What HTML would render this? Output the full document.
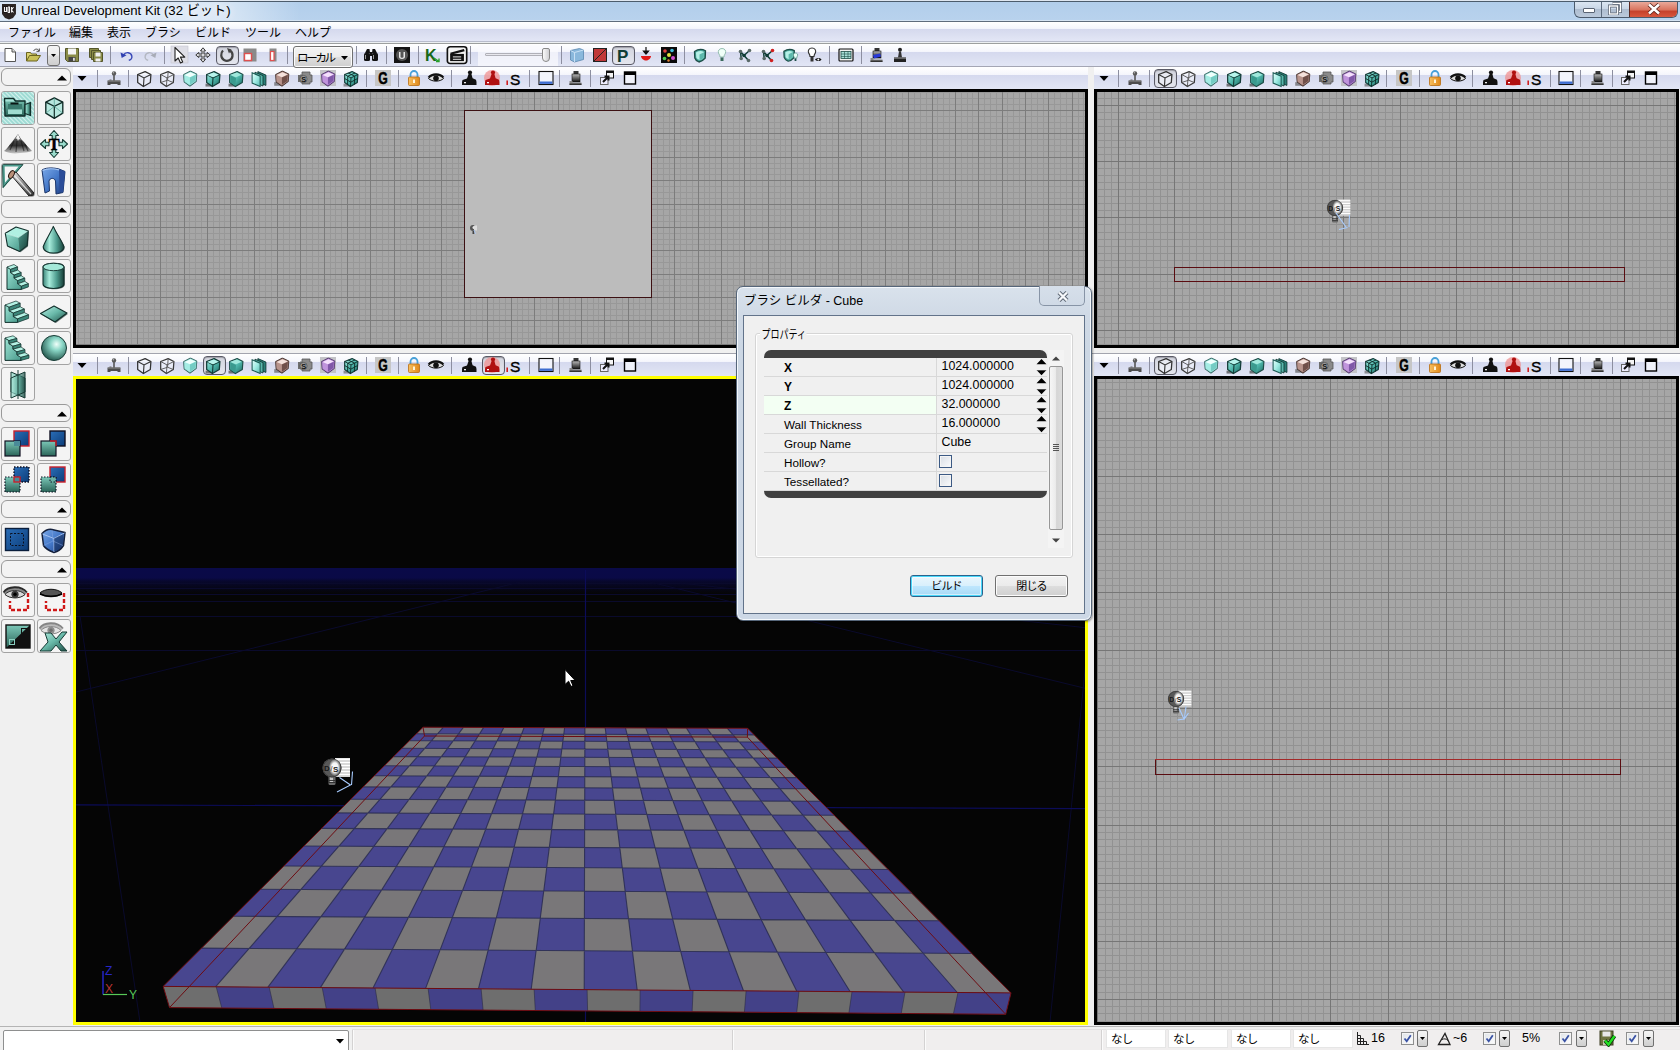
<!DOCTYPE html>
<html lang="ja"><head><meta charset="utf-8"><title>Unreal Development Kit</title>
<style>
*{box-sizing:border-box;margin:0;padding:0}
html,body{width:1680px;height:1050px;overflow:hidden;background:#f0f0f0}
body{position:relative;font-family:"Liberation Sans","Noto Sans CJK JP",sans-serif;font-size:12px;color:#000}
.a{position:absolute}
#title{left:0;top:0;width:1680px;height:22px;background:linear-gradient(#dfe7f1 0,#dfe7f1 1px,#4c5c6c 1px,#4c5c6c 2px,#b2ceeb 2px,#b8d2ed 20px,#d5e4f3 20px,#d5e4f3 21px,#5e6c7c 21px)}
#title .t{left:21px;top:3px;font-size:13.2px;line-height:16px;white-space:nowrap;color:#000;text-shadow:0 0 7px rgba(255,255,255,.95),0 0 12px rgba(255,255,255,.7),0 0 16px rgba(255,255,255,.5)}
#menu{left:0;top:22px;width:1680px;height:19px;background:linear-gradient(#ffffff 0,#f4f6fc 34%,#d5d9ee 38%,#dde1f2 75%,#e3e6f6 100%)}
#menu span{position:absolute;top:3px;line-height:16px;font-size:12px;white-space:nowrap}
#mline{left:0;top:41px;width:1680px;height:3px;background:linear-gradient(#b8bccc 0,#b8bccc 33.3%,#eceff2 33.4%,#eceff2 66.6%,#9c9f9f 66.7%)}
#tb{left:0;top:44px;width:1680px;height:22px;background:linear-gradient(#ffffff 0,#f5f6fc 34%,#d5d9ee 38%,#dde1f2 75%,#e2e6f5 100%)}
.vtb{height:22px;background:linear-gradient(#ffffff 0,#f5f6fc 34%,#d5d9ee 38%,#dde1f2 75%,#e2e6f5 100%)}
.sep{position:absolute;width:1px;background:#8d8fa0}
.vp{position:absolute;border:3px solid #000;background-color:#a6a6a6}
</style></head><body>
<div id="title" class="a">
<div class="a" style="left:0;top:2px;width:300px;height:18px;background:linear-gradient(90deg,rgba(255,255,255,.5) 0,rgba(255,255,255,.52) 72%,rgba(255,255,255,0) 100%)"></div>
<svg class="a" style="left:.5px;top:2.500px" width="16" height="17" viewBox="0 0 16 17"><path d="M1 1h14v10l-3 4-4 1.5L4 15 1 11z" fill="#2a2422"/><path d="M2.5 3h11v7h-11z" fill="#1a1615"/><path d="M3.5 4v4.5h2V4M7 4v5.5M7 4h1.5v5.5H7M10.5 4v5.5M12.5 4l-2 3 2 2.5" stroke="#f2f2f2" stroke-width="1.1" fill="none"/></svg>
<div class="a t">Unreal Development Kit (32 ビット)</div>
<div class="a" style="left:1574px;top:2px;width:104px;height:16px;border:1px solid #4b5a6c;border-top:none;border-radius:0 0 6px 6px;overflow:hidden;background:linear-gradient(#dbe6f2 0,#c9d6e6 45%,#aebdd0 50%,#bccadb 100%)">
<div class="a" style="left:26px;top:0;width:1px;height:18px;background:#5c6b7e"></div>
<div class="a" style="left:54px;top:0;width:49px;height:18px;border-left:1px solid #5c2a22;background:linear-gradient(#e9a99a 0,#d9725c 45%,#c4402b 50%,#d6553c 80%,#e8907a 100%)"></div>
<div class="a" style="left:8px;top:6px;width:12px;height:5px;background:#fff;border:1px solid #5a6474;border-radius:1px"></div>
<svg class="a" style="left:33px;top:0px" width="14" height="13" viewBox="0 0 14 13"><path d="M4.5 1.5h8v8h-2" fill="none" stroke="#5a6474" stroke-width="3"/><path d="M4.500 1.500h8v8h-2" fill="none" stroke="#fff" stroke-width="1.4"/><rect x="1.500" y="4" width="8" height="8" fill="none" stroke="#5a6474" stroke-width="3"/><rect x="1.500" y="4" width="8" height="8" fill="none" stroke="#fff" stroke-width="1.4"/></svg>
<svg class="a" style="left:72px;top:1px" width="14" height="12" viewBox="0 0 14 12"><path d="M2 1.500l10 9M12 1.500l-10 9" stroke="#5a2018" stroke-width="4.200" fill="none"/><path d="M2 1.500l10 9M12 1.500l-10 9" stroke="#fff" stroke-width="2.600" fill="none"/></svg>
</div>
</div>
<div id="menu" class="a"><span style="left:8px">ファイル</span><span style="left:69px">編集</span><span style="left:107px">表示</span><span style="left:145px">ブラシ</span><span style="left:195px">ビルド</span><span style="left:245px">ツール</span><span style="left:295px">ヘルプ</span></div>
<div id="mline" class="a"></div>
<div id="tb" class="a">
</div>
<svg width="0" height="0" style="position:absolute"><defs>
<linearGradient id="tl" x1="0" y1="0" x2="1" y2="1"><stop offset="0" stop-color="#b8f0e4"/><stop offset=".5" stop-color="#68b8a8"/><stop offset="1" stop-color="#1e4e46"/></linearGradient>
<linearGradient id="tv" x1="0" y1="0" x2="1" y2="0"><stop offset="0" stop-color="#b0ecde"/><stop offset=".55" stop-color="#5aa898"/><stop offset="1" stop-color="#1a463e"/></linearGradient>
<linearGradient id="td" x1="0" y1="0" x2="0" y2="1"><stop offset="0" stop-color="#7cc8b8"/><stop offset="1" stop-color="#2a6458"/></linearGradient>
<radialGradient id="ts" cx=".6" cy=".35" r=".7"><stop offset="0" stop-color="#f0fffa"/><stop offset=".35" stop-color="#8ad6c6"/><stop offset="1" stop-color="#1e5046"/></radialGradient>
<linearGradient id="bl" x1="0" y1="0" x2="1" y2="1"><stop offset="0" stop-color="#2a6eb8"/><stop offset="1" stop-color="#0c3c78"/></linearGradient>
<linearGradient id="ba" x1="0" y1="0" x2="1" y2="1"><stop offset="0" stop-color="#7aa8e8"/><stop offset=".5" stop-color="#4478c8"/><stop offset="1" stop-color="#1c3c80"/></linearGradient>
<linearGradient id="gy" x1="0" y1="0" x2="1" y2="1"><stop offset="0" stop-color="#e8e8e8"/><stop offset=".5" stop-color="#8a8a8a"/><stop offset="1" stop-color="#2a2a2a"/></linearGradient>
<linearGradient id="fL" x1="0" y1="0" x2="1" y2="1"><stop offset="0" stop-color="#9ce4d4"/><stop offset="1" stop-color="#4a9a8c"/></linearGradient><linearGradient id="fR" x1="0" y1="0" x2="1" y2="1"><stop offset="0" stop-color="#4a988a"/><stop offset="1" stop-color="#183e38"/></linearGradient><linearGradient id="cy" x1="0" y1="0" x2="1" y2="0"><stop offset="0" stop-color="#3a8478"/><stop offset=".3" stop-color="#a8ecdc"/><stop offset=".65" stop-color="#4e9c8e"/><stop offset="1" stop-color="#163c36"/></linearGradient><pattern id="hatch" width="3" height="3" patternUnits="userSpaceOnUse" patternTransform="rotate(45)"><rect width="3" height="3" fill="#9cdad2"/><rect width="3" height="1.100" fill="#d4f2ee"/></pattern>
</defs></svg>
<style>.lb{position:absolute;width:34px;height:34px;border:1px solid #a2a2a2;border-radius:3px;background:#f4f4f4;overflow:hidden}.lb svg{position:absolute;left:0;top:0}.lh{position:absolute;left:1px;width:70px;height:18px;border:1px solid #9a9a9a;border-radius:6px;background:#f3f3f3}</style>
<div class="a" style="left:0;top:67px;width:73px;height:960px;background:#f0f0f0"></div>
<div class="lh" style="top:68px"><svg class="a" style="left:55px;top:6px" width="10" height="6"><path d="M0 5.500L5 .5L10 5.500z" fill="#000"/></svg></div>
<div class="lb" style="left:1px;top:91px"><svg width="32" height="32" viewBox="0 0 32 32"><rect x="0" y="0" width="32" height="32" fill="url(#hatch)"/><path d="M2.500 6.500h9l2 2.500h9.500v15H3z" fill="url(#td)" stroke="#102e2a" stroke-width="1.400" stroke-linejoin="round"/><path d="M3.500 7.500h7.500l1.500 2H3.500z" fill="#a8e4d8"/><rect x="6" y="12" width="14" height="5" fill="#3a7a6e"/><rect x="8.500" y="10.500" width="8" height="2" fill="#0a1614"/><rect x="6" y="17.500" width="14" height="4.500" fill="#a0dccf"/><path d="M23 12.500l5.500-2v13l-5.500-2z" fill="url(#tv)" stroke="#102e2a" stroke-width="1.300" stroke-linejoin="round"/></svg></div><div class="lb" style="left:37px;top:91px"><svg width="32" height="32" viewBox="0 0 32 32"><g transform="translate(2.700 2.500) scale(.85)"><path d="M16 4l10 5v13l-10 6-10-6V9z" fill="#a8e4d8" fill-opacity=".8" stroke="#102a26" stroke-width="1.600" stroke-linejoin="round"/><path d="M6 9l10 5 10-5M16 14v14" stroke="#102a26" stroke-width="1.400" fill="none"/><path d="M16 4v10M6 22l10-8 10 8" stroke="#4a9a8c" stroke-width=".8" fill="none"/></g></svg></div>
<div class="lb" style="left:1px;top:127px"><svg width="32" height="32" viewBox="0 0 32 32"><defs><linearGradient id="mg" x1="0" y1="0" x2="0" y2="1"><stop offset="0" stop-color="#6a6a6a"/><stop offset=".6" stop-color="#2e2e2e"/><stop offset="1" stop-color="#5a5a5a" stop-opacity=".3"/></linearGradient></defs><path d="M2 23c3-2 5-6 8-9l3-4 3-4 3 5 3 3c2 3 5 6 8 9-4 2-8 1.500-12 2-6 1-12 0-16-2z" fill="url(#mg)"/><path d="M16 6l-2.500 5 1.500-.5 1 2.500 1-2 1.500 1z" fill="#f4f4f4"/><path d="M12 13l-4 9M15 13l-1 11M19 13l3 10M23 16l3 7" stroke="#111" stroke-width="1.200" fill="none" opacity=".55"/></svg></div><div class="lb" style="left:37px;top:127px"><svg width="32" height="32" viewBox="0 0 32 32"><path d="M16 2.500l4.500 5h-2.700v3.500h-3.600V7.500h-2.700zM16 29.500l4.500-5h-2.700v-3.500h-3.600v3.500h-2.700zM2.500 16l5-4.500v2.700h3.500v3.600H7.500v2.700zM29.500 16l-5-4.500v2.700h-3.500v3.600h3.500v2.700z" fill="#9adccc" stroke="#153a33" stroke-width="1.100" stroke-linejoin="round"/><text x="10.700" y="21.700" font-family="Liberation Serif,serif" font-weight="bold" font-size="16" fill="#000" stroke="#000" stroke-width=".5">T</text></svg></div>
<div class="lb" style="left:1px;top:163px"><svg width="32" height="32" viewBox="0 0 32 32"><path d="M1.500 1.500h17.500L2 21.500z" fill="none" stroke="#4a9a8c" stroke-width="2.200"/><path d="M.5 .5h20.500L1 23.500z" fill="none" stroke="#153a33" stroke-width=".8"/><path d="M9 11l5-3 18 21v3h-5z" fill="url(#gy)" stroke="#111" stroke-width=".9"/><path d="M12 11l17 19" stroke="#fff" stroke-width="1.200" opacity=".7"/><ellipse cx="9.500" cy="10.500" rx="2.300" ry="4.200" transform="rotate(30 9.500 10.500)" fill="#b89078" stroke="#2a1a14"/></svg></div><div class="lb" style="left:37px;top:163px"><svg width="32" height="32" viewBox="0 0 32 32"><path d="M4 6c3-2 9-3 17-1l6 2.500-2 21-7 1.500-.5-13c-1-3.500-5.500-3.500-6.500 0l.5 10-4.500 2z" fill="url(#ba)" stroke="#1a3468" stroke-width="1"/><path d="M21 5l6 2.500-2 21-3.500-1z" fill="#2a4c98"/><path d="M4.500 6.500c3-1.500 9-2.500 16.500-.7" stroke="#a8c8f4" stroke-width="1.200" fill="none"/></svg></div>
<div class="lh" style="top:200px"><svg class="a" style="left:55px;top:6px" width="10" height="6"><path d="M0 5.500L5 .5L10 5.500z" fill="#000"/></svg></div>
<div class="lb" style="left:1px;top:223px"><svg width="32" height="32" viewBox="0 0 32 32"><path d="M3.300 9.300L14 3l12.200 3.700-1 14.900-7.500 5.800L5.500 22.100z" fill="#0e2a26" transform="translate(.8 .9)" opacity=".6"/><path d="M3.300 9.300L14 3l12.200 3.700L16.500 13.500z" fill="#b0f0e2"/><path d="M3.300 9.300L16.500 13.500l1.200 13.900L5.500 22.100z" fill="url(#fL)"/><path d="M16.500 13.500L26.200 6.700l-1 14.900-7.500 5.800z" fill="url(#fR)"/><path d="M3.300 9.300L14 3l12.200 3.700-1 14.900-7.500 5.800L5.500 22.100z" fill="none" stroke="#12302c" stroke-width="1.100" stroke-linejoin="round"/><path d="M3.800 9.500L16.500 13.500 25.700 7" stroke="#d8fff6" stroke-width=".8" fill="none" opacity=".8"/></svg></div><div class="lb" style="left:37px;top:223px"><svg width="32" height="32" viewBox="0 0 32 32"><path d="M15.300 2.400C18 9 24 17 26 22.700c0 8.400-20.800 8.400-20.800 0C7 17 12.500 9 15.300 2.400z" fill="#0e2a26" transform="translate(.8 .8)" opacity=".55"/><path d="M15.300 2.400C18 9 24 17 26 22.700c0 8.400-20.800 8.400-20.800 0C7 17 12.500 9 15.300 2.400z" fill="url(#cy)" stroke="#12302c" stroke-width="1.100" stroke-linejoin="round"/></svg></div>
<div class="lb" style="left:1px;top:259px"><svg width="32" height="32" viewBox="0 0 32 32"><g><polygon points="5.0,7.0 8.6,9.4 8.6,12.6 12.2,15.0 12.2,18.2 15.8,20.6 15.8,23.8 19.4,26.2 19.4,29.4 5.0,29.4" fill="url(#fL)" stroke="#12302c" stroke-width="1" stroke-linejoin="round"/><polygon points="5.0,7.0 12.0,4.5 15.6,6.9 8.6,9.4" fill="#b4f2e4" stroke="#12302c" stroke-width=".7" stroke-linejoin="round"/><polygon points="8.6,9.4 15.6,6.9 15.6,10.1 8.6,12.6" fill="#3c877a" stroke="#12302c" stroke-width=".7" stroke-linejoin="round"/><polygon points="8.6,12.6 15.6,10.1 19.2,12.5 12.2,15.0" fill="#b4f2e4" stroke="#12302c" stroke-width=".7" stroke-linejoin="round"/><polygon points="12.2,15.0 19.2,12.5 19.2,15.7 12.2,18.2" fill="#3c877a" stroke="#12302c" stroke-width=".7" stroke-linejoin="round"/><polygon points="12.2,18.2 19.2,15.7 22.8,18.1 15.8,20.6" fill="#b4f2e4" stroke="#12302c" stroke-width=".7" stroke-linejoin="round"/><polygon points="15.8,20.6 22.8,18.1 22.8,21.3 15.8,23.8" fill="#3c877a" stroke="#12302c" stroke-width=".7" stroke-linejoin="round"/><polygon points="15.8,23.8 22.8,21.3 26.4,23.7 19.4,26.2" fill="#b4f2e4" stroke="#12302c" stroke-width=".7" stroke-linejoin="round"/><polygon points="19.4,26.2 26.4,23.7 26.4,26.9 19.4,29.4" fill="#3c877a" stroke="#12302c" stroke-width=".7" stroke-linejoin="round"/></g></svg></div><div class="lb" style="left:37px;top:259px"><svg width="32" height="32" viewBox="0 0 32 32"><path d="M5 7c0-5 21-5 21 0v17c0 6-21 6-21 0z" fill="#0e2a26" transform="translate(.8 .8)" opacity=".55"/><path d="M5 7c0-5 21-5 21 0v17c0 6-21 6-21 0z" fill="url(#cy)" stroke="#12302c" stroke-width="1.100"/><ellipse cx="15.500" cy="7" rx="10.500" ry="3.700" fill="#a4e8d8" stroke="#12302c" stroke-width=".9"/></svg></div>
<div class="lb" style="left:1px;top:295px"><svg width="32" height="32" viewBox="0 0 32 32"><g><polygon points="3.0,9.0 7.2,11.2 7.2,14.8 11.4,17.0 11.4,20.6 15.6,22.8 15.6,26.4 3.0,26.4" fill="url(#fL)" stroke="#12302c" stroke-width="1" stroke-linejoin="round"/><polygon points="3.0,9.0 14.0,5.0 18.2,7.2 7.2,11.2" fill="#b4f2e4" stroke="#12302c" stroke-width=".7" stroke-linejoin="round"/><polygon points="7.2,11.2 18.2,7.2 18.2,10.8 7.2,14.8" fill="#3c877a" stroke="#12302c" stroke-width=".7" stroke-linejoin="round"/><polygon points="7.2,14.8 18.2,10.8 22.4,13.0 11.4,17.0" fill="#b4f2e4" stroke="#12302c" stroke-width=".7" stroke-linejoin="round"/><polygon points="11.4,17.0 22.4,13.0 22.4,16.6 11.4,20.6" fill="#3c877a" stroke="#12302c" stroke-width=".7" stroke-linejoin="round"/><polygon points="11.4,20.6 22.4,16.6 26.6,18.8 15.6,22.8" fill="#b4f2e4" stroke="#12302c" stroke-width=".7" stroke-linejoin="round"/><polygon points="15.6,22.8 26.6,18.8 26.6,22.4 15.6,26.4" fill="#3c877a" stroke="#12302c" stroke-width=".7" stroke-linejoin="round"/></g></svg></div><div class="lb" style="left:37px;top:295px"><svg width="32" height="32" viewBox="0 0 32 32"><path d="M2.500 17.500L16 10l13 7-12 9z" fill="#0e2a26" transform="translate(.9 1.100)" opacity=".6"/><path d="M2.500 17.500L16 10l13 7-12 9z" fill="url(#tl)" stroke="#12302c" stroke-width="1.100" stroke-linejoin="round"/></svg></div>
<div class="lb" style="left:1px;top:331px"><svg width="32" height="32" viewBox="0 0 32 32"><g><polygon points="3.0,6.0 7.0,8.6 7.0,11.6 11.0,14.2 11.0,17.2 15.0,19.8 15.0,22.8 19.0,25.4 19.0,28.4 3.0,28.4" fill="url(#fL)" stroke="#12302c" stroke-width="1" stroke-linejoin="round"/><polygon points="3.0,6.0 11.0,3.8 15.0,6.4 7.0,8.6" fill="#b4f2e4" stroke="#12302c" stroke-width=".7" stroke-linejoin="round"/><polygon points="7.0,8.6 15.0,6.4 15.0,9.4 7.0,11.6" fill="#3c877a" stroke="#12302c" stroke-width=".7" stroke-linejoin="round"/><polygon points="7.0,11.6 15.0,9.4 19.0,12.0 11.0,14.2" fill="#b4f2e4" stroke="#12302c" stroke-width=".7" stroke-linejoin="round"/><polygon points="11.0,14.2 19.0,12.0 19.0,15.0 11.0,17.2" fill="#3c877a" stroke="#12302c" stroke-width=".7" stroke-linejoin="round"/><polygon points="11.0,17.2 19.0,15.0 23.0,17.6 15.0,19.8" fill="#b4f2e4" stroke="#12302c" stroke-width=".7" stroke-linejoin="round"/><polygon points="15.0,19.8 23.0,17.6 23.0,20.6 15.0,22.8" fill="#3c877a" stroke="#12302c" stroke-width=".7" stroke-linejoin="round"/><polygon points="15.0,22.8 23.0,20.6 27.0,23.2 19.0,25.4" fill="#b4f2e4" stroke="#12302c" stroke-width=".7" stroke-linejoin="round"/><polygon points="19.0,25.4 27.0,23.2 27.0,26.2 19.0,28.4" fill="#3c877a" stroke="#12302c" stroke-width=".7" stroke-linejoin="round"/></g></svg></div><div class="lb" style="left:37px;top:331px"><svg width="32" height="32" viewBox="0 0 32 32"><circle cx="16" cy="16" r="12.500" fill="url(#ts)" stroke="#163a34" stroke-width="1" stroke-linejoin="round"/></svg></div>
<div class="lb" style="left:1px;top:367px"><svg width="32" height="32" viewBox="0 0 32 32"><path d="M9 4l14 6v20l-14-6z" fill="url(#tv)" fill-opacity=".8" stroke="#163a34" stroke-width="1" stroke-linejoin="round"/><path d="M23 4l-14 6v20l14-6z" fill="url(#tv)" fill-opacity=".7" stroke="#163a34" stroke-width="1" stroke-linejoin="round"/><path d="M16 2v29" stroke="#163a34" stroke-width="1"/></svg></div>
<div class="lh" style="top:404px"><svg class="a" style="left:55px;top:6px" width="10" height="6"><path d="M0 5.500L5 .5L10 5.500z" fill="#000"/></svg></div>
<div class="lb" style="left:1px;top:427px"><svg width="32" height="32" viewBox="0 0 32 32"><rect x="12" y="3" width="15" height="15" fill="url(#bl)" stroke="#c8202c" stroke-width="1.400" /><rect x="3" y="13" width="15" height="15" fill="url(#td)" stroke="#112" stroke-width="1.200" /><rect x="12" y="13" width="6" height="5" fill="#4a8a98"/></svg></div><div class="lb" style="left:37px;top:427px"><svg width="32" height="32" viewBox="0 0 32 32"><rect x="12" y="3" width="15" height="15" fill="url(#bl)" stroke="#112" stroke-width="1.400" /><rect x="3" y="13" width="15" height="15" fill="url(#td)" stroke="#112" stroke-width="1.200" /><path d="M12 13h6v5" stroke="#c8202c" stroke-width="1.400" fill="none"/></svg></div>
<div class="lb" style="left:1px;top:463px"><svg width="32" height="32" viewBox="0 0 32 32"><rect x="12" y="3" width="15" height="15" fill="url(#bl)" stroke="#112" stroke-width="1.400" stroke-dasharray="1.500 1.500"/><rect x="3" y="13" width="15" height="15" fill="url(#td)" stroke="#112" stroke-width="1.200" stroke-dasharray="1.500 1.500"/><rect x="12" y="13" width="6" height="5" fill="#4a8a98" stroke="#c8202c" stroke-width="1.400"/></svg></div><div class="lb" style="left:37px;top:463px"><svg width="32" height="32" viewBox="0 0 32 32"><rect x="12" y="3" width="15" height="15" fill="url(#bl)" stroke="#c8202c" stroke-width="1.400" /><rect x="3" y="13" width="15" height="15" fill="url(#td)" stroke="#112" stroke-width="1.200" stroke-dasharray="1.500 1.500"/><rect x="12" y="13" width="6" height="5" fill="#6ab0a4" stroke="#112" stroke-dasharray="1.500 1.500"/></svg></div>
<div class="lh" style="top:500px"><svg class="a" style="left:55px;top:6px" width="10" height="6"><path d="M0 5.500L5 .5L10 5.500z" fill="#000"/></svg></div>
<div class="lb" style="left:1px;top:523px"><svg width="32" height="32" viewBox="0 0 32 32"><rect x="3.500" y="4.500" width="23" height="22" fill="url(#bl)" stroke="#0a1e3c" stroke-width="1.400"/><rect x="8.500" y="9.500" width="13" height="12" fill="none" stroke="#0a1020" stroke-dasharray="2 1.500"/></svg></div><div class="lb" style="left:37px;top:523px"><svg width="32" height="32" viewBox="0 0 32 32"><path d="M4 9.500Q9 4.500 14 5.500L27 8.500L25.500 21.500Q22 27 16 28.500Q8 25.500 5.500 21.500z" fill="url(#ba)" stroke="#14203c" stroke-width="1.500" stroke-linejoin="round"/><path d="M4.500 10l11.500 4.500L26.500 9M16 14.500v13.500" stroke="#b8d0f8" stroke-width="1" fill="none" opacity=".8"/><path d="M16 14.500L25.500 10L25 21Q21 26 16 27.500z" fill="#0c1c40" opacity=".45"/><path d="M14 6l1 11-9.500 4.500M15 17l10 4.500" stroke="#88a8e0" stroke-width=".7" fill="none" opacity=".7"/></svg></div>
<div class="lh" style="top:560px"><svg class="a" style="left:55px;top:6px" width="10" height="6"><path d="M0 5.500L5 .5L10 5.500z" fill="#000"/></svg></div>
<div class="lb" style="left:1px;top:583px"><svg width="32" height="32" viewBox="0 0 32 32"><path d="M1.500 9c4-6.500 17-7.500 23 .5-5 6.500-18 6.500-23-.5z" fill="#8a8a8a"/><path d="M3 10.500c4-5 15-5.500 20 0-5 4.500-15 4.500-20 0z" fill="#d8d8d8" stroke="#222" stroke-width=".9"/><circle cx="13" cy="10.300" r="3.600" fill="#3a3a3a"/><circle cx="13" cy="10.300" r="1.700" fill="#000"/><path d="M1.500 8.500c4-6.500 17.500-7.500 23.500 0" stroke="#2a2a2a" stroke-width="1.800" fill="none"/><path d="M26 9v17H8v-9" stroke="#d01818" stroke-width="2.400" stroke-dasharray="4 2" fill="none"/></svg></div><div class="lb" style="left:37px;top:583px"><svg width="32" height="32" viewBox="0 0 32 32"><path d="M2 9c5-5 17-5 22 0-5 5-17 5-22 0z" fill="#555" stroke="#111"/><path d="M2 10c6 3 16 3 22 0" stroke="#000" stroke-width="1.600" fill="none"/><path d="M26 9v17H8v-9" stroke="#d01818" stroke-width="2.400" stroke-dasharray="4 2" fill="none"/></svg></div>
<div class="lb" style="left:1px;top:619px"><svg width="32" height="32" viewBox="0 0 32 32"><rect x="4" y="5" width="24" height="23" fill="#111"/><path d="M4 28V5H28z" fill="url(#td)"/><rect x="4" y="5" width="24" height="23" fill="none" stroke="#111" stroke-width="1.400"/><rect x="7.500" y="19.500" width="5" height="5" fill="none" stroke="#8ad0c0"/><rect x="19.500" y="8.500" width="5" height="5" fill="none" stroke="#111"/></svg></div><div class="lb" style="left:37px;top:619px"><svg width="32" height="32" viewBox="0 0 32 32"><g opacity=".55"><path d="M1.500 9c4-6.500 17-7.500 23 .5-5 6.500-18 6.500-23-.5z" fill="#8a8a8a"/><path d="M3 10.500c4-5 15-5.500 20 0-5 4.500-15 4.500-20 0z" fill="#d8d8d8" stroke="#222" stroke-width=".9"/><circle cx="13" cy="10.300" r="3.600" fill="#3a3a3a"/><circle cx="13" cy="10.300" r="1.700" fill="#000"/><path d="M1.500 8.500c4-6.500 17.500-7.500 23.500 0" stroke="#2a2a2a" stroke-width="1.800" fill="none"/></g><path d="M7 13l6 0 5 6 6-7h5l-8 10 8 9h-6l-5-6-5 6H2l8-9z" fill="url(#tl)" stroke="#163a34" stroke-width="1"/></svg></div>
<div class="vp" style="left:73px;top:89px;width:1015px;height:259px"></div>
<svg class="a" style="left:76px;top:92px" width="1009" height="253" shape-rendering="crispEdges"><path d="M2.5 0V253M8.5 0V253M20.5 0V253M26.5 0V253M32.5 0V253M43.5 0V253M49.5 0V253M55.5 0V253M67.5 0V253M72.5 0V253M78.5 0V253M90.5 0V253M96.5 0V253M102.5 0V253M113.5 0V253M119.5 0V253M125.5 0V253M137.5 0V253M143.5 0V253M148.5 0V253M160.5 0V253M166.5 0V253M172.5 0V253M183.5 0V253M189.5 0V253M195.5 0V253M207.5 0V253M213.5 0V253M219.5 0V253M230.5 0V253M236.5 0V253M242.5 0V253M254.5 0V253M259.5 0V253M265.5 0V253M277.5 0V253M283.5 0V253M289.5 0V253M300.5 0V253M306.5 0V253M312.5 0V253M324.5 0V253M330.5 0V253M335.5 0V253M347.5 0V253M353.5 0V253M359.5 0V253M370.5 0V253M376.5 0V253M382.5 0V253M394.5 0V253M400.5 0V253M406.5 0V253M417.5 0V253M423.5 0V253M429.5 0V253M441.5 0V253M446.5 0V253M452.5 0V253M464.5 0V253M470.5 0V253M476.5 0V253M487.5 0V253M493.5 0V253M499.5 0V253M511.5 0V253M517.5 0V253M522.5 0V253M534.5 0V253M540.5 0V253M546.5 0V253M557.5 0V253M563.5 0V253M569.5 0V253M581.5 0V253M587.5 0V253M593.5 0V253M604.5 0V253M610.5 0V253M616.5 0V253M628.5 0V253M633.5 0V253M639.5 0V253M651.5 0V253M657.5 0V253M663.5 0V253M674.5 0V253M680.5 0V253M686.5 0V253M698.5 0V253M704.5 0V253M709.5 0V253M721.5 0V253M727.5 0V253M733.5 0V253M744.5 0V253M750.5 0V253M756.5 0V253M768.5 0V253M774.5 0V253M780.5 0V253M791.5 0V253M797.5 0V253M803.5 0V253M815.5 0V253M820.5 0V253M826.5 0V253M838.5 0V253M844.5 0V253M850.5 0V253M861.5 0V253M867.5 0V253M873.5 0V253M885.5 0V253M891.5 0V253M896.5 0V253M908.5 0V253M914.5 0V253M920.5 0V253M931.5 0V253M937.5 0V253M943.5 0V253M955.5 0V253M961.5 0V253M967.5 0V253M978.5 0V253M984.5 0V253M990.5 0V253M1002.5 0V253M1007.5 0V253M0 0.5H1009M0 6.5H1009M0 12.5H1009M0 24.5H1009M0 30.5H1009M0 36.5H1009M0 47.5H1009M0 53.5H1009M0 59.5H1009M0 71.5H1009M0 76.5H1009M0 82.5H1009M0 94.5H1009M0 100.5H1009M0 106.5H1009M0 117.5H1009M0 123.5H1009M0 129.5H1009M0 141.5H1009M0 147.5H1009M0 152.5H1009M0 164.5H1009M0 170.5H1009M0 176.5H1009M0 187.5H1009M0 193.5H1009M0 199.5H1009M0 211.5H1009M0 217.5H1009M0 223.5H1009M0 234.5H1009M0 240.5H1009M0 246.5H1009" stroke="#989898" fill="none"/><path d="M14.5 0V253M37.5 0V253M61.5 0V253M84.5 0V253M108.5 0V253M131.5 0V253M154.5 0V253M178.5 0V253M201.5 0V253M224.5 0V253M248.5 0V253M271.5 0V253M294.5 0V253M318.5 0V253M341.5 0V253M365.5 0V253M388.5 0V253M411.5 0V253M435.5 0V253M458.5 0V253M482.5 0V253M505.5 0V253M528.5 0V253M552.5 0V253M575.5 0V253M598.5 0V253M622.5 0V253M645.5 0V253M668.5 0V253M692.5 0V253M715.5 0V253M739.5 0V253M762.5 0V253M785.5 0V253M809.5 0V253M832.5 0V253M856.5 0V253M879.5 0V253M902.5 0V253M926.5 0V253M949.5 0V253M972.5 0V253M996.5 0V253M0 18.5H1009M0 41.5H1009M0 65.5H1009M0 88.5H1009M0 112.5H1009M0 135.5H1009M0 158.5H1009M0 182.5H1009M0 205.5H1009M0 228.5H1009M0 252.5H1009" stroke="#7c7c7c" fill="none"/><rect x="388.5" y="18.5" width="187" height="187" fill="#bcbcbc" stroke="#3c1012"/></svg>
<div class="vp" style="left:1094px;top:89px;width:585px;height:259px"></div>
<svg class="a" style="left:1097px;top:92px" width="579" height="253" shape-rendering="crispEdges"><path d="M0.5 0V253M7.5 0V253M14.5 0V253M28.5 0V253M35.5 0V253M42.5 0V253M49.5 0V253M56.5 0V253M63.5 0V253M70.5 0V253M85.5 0V253M92.5 0V253M99.5 0V253M106.5 0V253M113.5 0V253M120.5 0V253M127.5 0V253M141.5 0V253M148.5 0V253M155.5 0V253M162.5 0V253M169.5 0V253M176.5 0V253M183.5 0V253M197.5 0V253M204.5 0V253M211.5 0V253M218.5 0V253M225.5 0V253M232.5 0V253M239.5 0V253M253.5 0V253M260.5 0V253M267.5 0V253M274.5 0V253M281.5 0V253M288.5 0V253M295.5 0V253M310.5 0V253M317.5 0V253M324.5 0V253M331.5 0V253M338.5 0V253M345.5 0V253M352.5 0V253M366.5 0V253M373.5 0V253M380.5 0V253M387.5 0V253M394.5 0V253M401.5 0V253M408.5 0V253M422.5 0V253M429.5 0V253M436.5 0V253M443.5 0V253M450.5 0V253M457.5 0V253M464.5 0V253M478.5 0V253M485.5 0V253M492.5 0V253M499.5 0V253M506.5 0V253M513.5 0V253M520.5 0V253M535.5 0V253M542.5 0V253M549.5 0V253M556.5 0V253M563.5 0V253M570.5 0V253M577.5 0V253M0 6.5H579M0 20.5H579M0 27.5H579M0 34.5H579M0 41.5H579M0 48.5H579M0 55.5H579M0 62.5H579M0 76.5H579M0 83.5H579M0 90.5H579M0 97.5H579M0 104.5H579M0 111.5H579M0 118.5H579M0 132.5H579M0 140.5H579M0 147.5H579M0 154.5H579M0 161.5H579M0 168.5H579M0 175.5H579M0 189.5H579M0 196.5H579M0 203.5H579M0 210.5H579M0 217.5H579M0 224.5H579M0 231.5H579M0 245.5H579M0 252.5H579" stroke="#929292" fill="none"/><path d="M21.5 0V253M77.5 0V253M134.5 0V253M190.5 0V253M246.5 0V253M303.5 0V253M359.5 0V253M415.5 0V253M471.5 0V253M527.5 0V253M0 13.5H579M0 69.5H579M0 125.5H579M0 182.5H579M0 238.5H579" stroke="#767676" fill="none"/><rect x="77.5" y="175.5" width="450" height="14" fill="none" stroke="#5a0c10"/></svg>
<div class="vp" style="left:1094px;top:376px;width:585px;height:649px"></div>
<svg class="a" style="left:1097px;top:379px" width="579" height="643" shape-rendering="crispEdges"><path d="M8.5 0V643M15.5 0V643M22.5 0V643M29.5 0V643M37.5 0V643M44.5 0V643M51.5 0V643M66.5 0V643M73.5 0V643M80.5 0V643M88.5 0V643M95.5 0V643M102.5 0V643M109.5 0V643M124.5 0V643M131.5 0V643M138.5 0V643M146.5 0V643M153.5 0V643M160.5 0V643M167.5 0V643M182.5 0V643M189.5 0V643M196.5 0V643M204.5 0V643M211.5 0V643M218.5 0V643M226.5 0V643M240.5 0V643M247.5 0V643M255.5 0V643M262.5 0V643M269.5 0V643M276.5 0V643M284.5 0V643M298.5 0V643M305.5 0V643M313.5 0V643M320.5 0V643M327.5 0V643M334.5 0V643M342.5 0V643M356.5 0V643M364.5 0V643M371.5 0V643M378.5 0V643M385.5 0V643M393.5 0V643M400.5 0V643M414.5 0V643M422.5 0V643M429.5 0V643M436.5 0V643M443.5 0V643M451.5 0V643M458.5 0V643M472.5 0V643M480.5 0V643M487.5 0V643M494.5 0V643M502.5 0V643M509.5 0V643M516.5 0V643M531.5 0V643M538.5 0V643M545.5 0V643M552.5 0V643M560.5 0V643M567.5 0V643M574.5 0V643M0 3.5H579M0 10.5H579M0 17.5H579M0 24.5H579M0 32.5H579M0 46.5H579M0 53.5H579M0 61.5H579M0 68.5H579M0 75.5H579M0 82.5H579M0 90.5H579M0 104.5H579M0 112.5H579M0 119.5H579M0 126.5H579M0 133.5H579M0 141.5H579M0 148.5H579M0 162.5H579M0 170.5H579M0 177.5H579M0 184.5H579M0 191.5H579M0 199.5H579M0 206.5H579M0 220.5H579M0 228.5H579M0 235.5H579M0 242.5H579M0 250.5H579M0 257.5H579M0 264.5H579M0 279.5H579M0 286.5H579M0 293.5H579M0 300.5H579M0 308.5H579M0 315.5H579M0 322.5H579M0 337.5H579M0 344.5H579M0 351.5H579M0 358.5H579M0 366.5H579M0 373.5H579M0 380.5H579M0 395.5H579M0 402.5H579M0 409.5H579M0 417.5H579M0 424.5H579M0 431.5H579M0 438.5H579M0 453.5H579M0 460.5H579M0 467.5H579M0 475.5H579M0 482.5H579M0 489.5H579M0 496.5H579M0 511.5H579M0 518.5H579M0 525.5H579M0 533.5H579M0 540.5H579M0 547.5H579M0 555.5H579M0 569.5H579M0 576.5H579M0 584.5H579M0 591.5H579M0 598.5H579M0 605.5H579M0 613.5H579M0 627.5H579M0 634.5H579M0 642.5H579" stroke="#929292" fill="none"/><path d="M0.5 0V643M59.5 0V643M117.5 0V643M175.5 0V643M233.5 0V643M291.5 0V643M349.5 0V643M407.5 0V643M465.5 0V643M523.5 0V643M0 39.5H579M0 97.5H579M0 155.5H579M0 213.5H579M0 271.5H579M0 329.5H579M0 387.5H579M0 446.5H579M0 504.5H579M0 562.5H579M0 620.5H579" stroke="#767676" fill="none"/><rect x="58.5" y="380.5" width="465" height="15" fill="none" stroke="#5a0c10"/><path d="M58 380.5h465" stroke="#a42a2a"/></svg>
<div class="a" style="left:73px;top:376px;width:1015px;height:649px;border:3px solid #ffff00;background:#050505"></div>
<svg width="0" height="0" style="position:absolute"><defs>
<linearGradient id="c2" x1="0" y1="0" x2="1" y2="1"><stop offset="0" stop-color="#e8fffc"/><stop offset=".5" stop-color="#a0ece4"/><stop offset="1" stop-color="#58b8b0"/></linearGradient>
<linearGradient id="c3" x1="0" y1="0" x2="1" y2="1"><stop offset="0" stop-color="#a8f0e8"/><stop offset=".5" stop-color="#50b8ac"/><stop offset="1" stop-color="#1c6a62"/></linearGradient>
<linearGradient id="c6" x1="0" y1="0" x2="1" y2="1"><stop offset="0" stop-color="#f0dcd4"/><stop offset=".5" stop-color="#b08c84"/><stop offset="1" stop-color="#5a3c38"/></linearGradient>
<linearGradient id="c8" x1="0" y1="0" x2="1" y2="1"><stop offset="0" stop-color="#f0d8fc"/><stop offset=".5" stop-color="#b88cd8"/><stop offset="1" stop-color="#6a4890"/></linearGradient>
<linearGradient id="lk" x1="0" y1="0" x2="1" y2="0"><stop offset="0" stop-color="#f8c060"/><stop offset="1" stop-color="#e08818"/></linearGradient>
<linearGradient id="st" x1="0" y1="0" x2="0" y2="1"><stop offset="0" stop-color="#bbb"/><stop offset="1" stop-color="#111"/></linearGradient>
</defs></svg>
<style>.pr{position:absolute;width:23px;height:19px;border:1px solid #5a5a66;border-radius:4px;background:linear-gradient(#d2d4de,#e4e6ee);box-shadow:inset 0 1px 1px rgba(0,0,0,.25)}</style>
<div class="a" style="left:0;top:66px;width:1680px;height:1px;background:#a4a6b4"></div>
<div class="a vtb" style="left:73px;top:67px;width:1015px"></div><svg class="a" style="left:74px;top:70px;overflow:visible" width="16" height="16" viewBox="0 0 16 16"><path d="M3.500 6h9L8 11z" fill="#000"/></svg><svg class="a" style="left:106px;top:70px;overflow:visible" width="16" height="16" viewBox="0 0 16 16"><circle cx="8" cy="3.400" r="2.200" fill="#5a5a5a"/><circle cx="7.400" cy="2.800" r=".8" fill="#b0b0b0"/><path d="M7.200 5h1.600v6H7.200z" fill="#555"/><path d="M1.500 10.500h13v4.500h-3v-1h-7v1h-3z" fill="#4c4c4c"/><path d="M2 10.500h12v1.200H2z" fill="#7c7c7c"/><rect x="3.500" y="9.500" width="2" height="1" fill="#666"/></svg><svg class="a" style="left:136px;top:70px;overflow:visible" width="16" height="16" viewBox="0 0 16 16"><g transform="translate(-1.2 -.7) scale(1.15)"><path d="M2.500 4.500L9 2l5 2.500-.5 7L7.500 15 2.500 11.500z" fill="#f4f5fb" fill-opacity=".6" stroke="#333" stroke-width="1.100" stroke-linejoin="round"/><path d="M2.500 4.500L8 7.500 14 4.500M8 7.500L7.500 15" stroke="#333" stroke-width="1" fill="none"/></g></svg><svg class="a" style="left:159px;top:70px;overflow:visible" width="16" height="16" viewBox="0 0 16 16"><g transform="translate(-1.2 -.7) scale(1.15)"><path d="M2.500 4.500L9 2l5 2.500-.5 7L7.500 15 2.500 11.500z" fill="#f4f5fb" fill-opacity=".6" stroke="#3a3a3a" stroke-width="1.100" stroke-linejoin="round"/><path d="M2.500 4.500L8 7.500 14 4.500M8 7.500L7.500 15M9 2L8.500 9.500 2.500 11.500M8.500 9.500L13.500 11.500" stroke="#555" stroke-width=".8" fill="none"/></g></svg><svg class="a" style="left:182px;top:70px;overflow:visible" width="16" height="16" viewBox="0 0 16 16"><g transform="translate(-.3 -.2) scale(1.03)"><path d="M2.500 5L8.500 2 14 4.500 13.500 11 8 15 3 11.500z" fill="#a4ece4" stroke="#2c5e5a" stroke-width="2.200" stroke-linejoin="round"/><path d="M2.500 5L8.500 2 14 4.500 13.500 11 8 15 3 11.500z" fill="#a4ece4" stroke="#a4ece4" stroke-width=".6" stroke-linejoin="round"/><path d="M2.800 5L8.500 2.400 13.600 4.600 8 7.300z" fill="#effffd"/><path d="M8 7.500L13.700 4.800 13.300 10.800 8 14.600z" fill="#74ccc4"/></g></svg><svg class="a" style="left:205px;top:70px;overflow:visible" width="16" height="16" viewBox="0 0 16 16"><g transform="translate(-1.2 -.7) scale(1.15)"><path d="M1.500 12.500h6V15h-6z" fill="#444" opacity=".7"/><path d="M2.500 4.500L9 2l5 2.500-.5 7L7.500 15 2.500 11.500z" fill="url(#c3)" stroke="#143c38" stroke-width="1.100" stroke-linejoin="round"/><path d="M2.500 4.500L8 7.500 14 4.500M8 7.500L7.500 15" stroke="#143c38" stroke-width="1" fill="none"/><path d="M3 5l5.500-2.200L13 4.800 8 7z" fill="#b8f4ec"/></g></svg><svg class="a" style="left:228px;top:70px;overflow:visible" width="16" height="16" viewBox="0 0 16 16"><g transform="translate(-1.2 -.7) scale(1.15)"><path d="M1.500 12.500h6V15h-6z" fill="#444" opacity=".7"/><path d="M2.500 4.500L9 2l5 2.500-.5 7L7.500 15 2.500 11.500z" fill="url(#c3)" stroke="#1c4c46" stroke-width="1" stroke-linejoin="round"/><path d="M3 5l5.500-2.200L13 4.800 8 7z" fill="#a0e8dc"/><path d="M8 7.500L7.500 14.500l-4.500-3V5z" fill="#3a9a8e"/></g></svg><svg class="a" style="left:251px;top:70px;overflow:visible" width="16" height="16" viewBox="0 0 16 16"><g transform="translate(-1.2 -.7) scale(1.15)"><path d="M7 2l7 3v9l-7-3z" fill="#2a8078" stroke="#143c38" stroke-width=".8"/><path d="M4.500 2.500l7 3v9l-7-3z" fill="#58b8ac" stroke="#143c38" stroke-width=".8"/><path d="M2 3l7 3v9l-7-3z" fill="url(#c2)" stroke="#1c5a54" stroke-width=".9"/></g></svg><svg class="a" style="left:274px;top:70px;overflow:visible" width="16" height="16" viewBox="0 0 16 16"><g transform="translate(-.3 -.2) scale(1.03)"><path d="M.5 12h7.500v3.500H.5z" fill="#4a4a4a" opacity=".6"/><path d="M2.500 5L8.500 2 14 4.500 13.500 11 8 15 3 11.500z" fill="#b8948c" stroke="#3e2c28" stroke-width="2.200" stroke-linejoin="round"/><path d="M2.500 5L8.500 2 14 4.500 13.500 11 8 15 3 11.500z" fill="#b8948c" stroke="#b8948c" stroke-width=".6" stroke-linejoin="round"/><path d="M2.800 5L8.500 2.400 13.600 4.600 8 7.300z" fill="#f4e2dc"/><path d="M8 7.500L13.700 4.800 13.300 10.800 8 14.600z" fill="#70504a"/></g></svg><svg class="a" style="left:297px;top:70px;overflow:visible" width="16" height="16" viewBox="0 0 16 16"><path d="M5 2h8v3h2v7h-2v2H5v-2H3V5h2z" fill="#8a8a8a" stroke="#555" stroke-width=".8"/><path d="M1 5h5v7H1z" fill="#6e6e6e"/><circle cx="6.500" cy="9" r="3.600" fill="#999" stroke="#444" stroke-width=".6"/><text x="4.300" y="11.700" font-family="Liberation Sans,sans-serif" font-weight="bold" font-size="7.500" fill="#111">S</text></svg><svg class="a" style="left:320px;top:70px;overflow:visible" width="16" height="16" viewBox="0 0 16 16"><rect x="0" y="0" width="16" height="16" fill="#c4c4c8"/><g transform="translate(-.3 -.2) scale(1.03)"><path d="M2.500 5L8.500 2 14 4.500 13.500 11 8 15 3 11.500z" fill="#c094dc" stroke="#4c3468" stroke-width="2.200" stroke-linejoin="round"/><path d="M2.500 5L8.500 2 14 4.500 13.500 11 8 15 3 11.500z" fill="#c094dc" stroke="#c094dc" stroke-width=".6" stroke-linejoin="round"/><path d="M2.800 5L8.500 2.400 13.600 4.600 8 7.300z" fill="#f4e0fc"/><path d="M8 7.500L13.700 4.800 13.300 10.800 8 14.600z" fill="#8058a8"/></g></svg><svg class="a" style="left:343px;top:70px;overflow:visible" width="16" height="16" viewBox="0 0 16 16"><g transform="translate(-1.2 -.7) scale(1.15)"><path d="M1.500 12.500h6V15h-6z" fill="#555" opacity=".6"/><path d="M2.500 4.500L9 2l5 2.500-.5 7L7.500 15 2.500 11.500z" fill="url(#c3)" stroke="#143c38" stroke-width="1" stroke-linejoin="round"/><path d="M2.500 4.500L8 7.500 14 4.500M8 7.500L7.500 15M5.700 3.300l5.500 2.700-.3 7.300M11.500 3.200L5.200 6l-.2 7.300M2.500 8l5.300 3.200 6-3.200" stroke="#0e2e2a" stroke-width=".8" fill="none"/></g></svg><svg class="a" style="left:375px;top:70px;overflow:visible" width="16" height="16" viewBox="0 0 16 16"><rect x="0" y="0" width="16" height="16" fill="#c6c6c6"/><text x="3.200" y="14.300" font-family="Liberation Sans,sans-serif" font-weight="bold" font-size="17" fill="#000" stroke="#000" stroke-width=".5" textLength="9.500" lengthAdjust="spacingAndGlyphs">G</text></svg><svg class="a" style="left:406px;top:70px;overflow:visible" width="16" height="16" viewBox="0 0 16 16"><path d="M4.500 7V4.500a3.500 3.500 0 0 1 7 0V7" fill="none" stroke="#48a0d8" stroke-width="1.800"/><rect x="2.500" y="7" width="11" height="8.500" rx="1" fill="url(#lk)" stroke="#b86c10" stroke-width=".8"/><rect x="7" y="9.500" width="2" height="3.500" fill="#fff4d8"/></svg><svg class="a" style="left:428px;top:70px;overflow:visible" width="16" height="16" viewBox="0 0 16 16"><path d="M.5 8.500C4 4 12 4 15.500 8.500 12 12 4 12 .5 8.500z" fill="#ddd" stroke="#111" stroke-width="1"/><path d="M.5 7.500C4 3 12 3 15.500 7.500" stroke="#111" stroke-width="2" fill="none"/><circle cx="8" cy="8.300" r="2.800" fill="#111"/></svg><svg class="a" style="left:461px;top:70px;overflow:visible" width="16" height="16" viewBox="0 0 16 16"><g fill="#111"><circle cx="9" cy="2.600" r="2.100"/><path d="M7.600 4h2.800l1.200 4.200 3.400 1.600.5 2.200v3H1v-3l.5-2 4.500-1.500z"/></g><rect x="3" y="12" width="2" height="1.300" fill="#eee"/></svg><svg class="a" style="left:484px;top:70px;overflow:visible" width="16" height="16" viewBox="0 0 16 16"><circle cx="8" cy="8" r="8" fill="#f09090" opacity=".75"/><g fill="#b01010"><circle cx="9" cy="2.600" r="2.100"/><path d="M7.600 4h2.800l1.200 4.200 3.400 1.600.5 2.200v3H1v-3l.5-2 4.500-1.500z"/></g><rect x="3" y="12" width="2" height="1.300" fill="#fff"/></svg><svg class="a" style="left:506px;top:70px;overflow:visible" width="16" height="16" viewBox="0 0 16 16"><path d="M1.200 10.500v4.500" stroke="#d02020" stroke-width="1.600"/><text x="4" y="15" font-family="Liberation Sans,sans-serif" font-size="15.500" fill="#000" stroke="#000" stroke-width=".35">S</text></svg><svg class="a" style="left:538px;top:70px;overflow:visible" width="16" height="16" viewBox="0 0 16 16"><rect x="1" y="1.500" width="14" height="13" fill="#f2f4fc" stroke="#111" stroke-width="1.100"/><rect x="1.600" y="11.500" width="12.800" height="2.400" fill="#3c6cd0"/></svg><svg class="a" style="left:568px;top:70px;overflow:visible" width="16" height="16" viewBox="0 0 16 16"><rect x="5.500" y="1" width="5" height="3" fill="#333"/><rect x="4" y="4" width="8" height="8" fill="url(#st)" stroke="#111" stroke-width=".6"/><path d="M1.500 11h3v1.500h9V15h-12z" fill="#888"/><path d="M1.500 13.500h12V15h-12z" fill="#333"/></svg><svg class="a" style="left:599px;top:70px;overflow:visible" width="16" height="16" viewBox="0 0 16 16"><rect x="7.500" y="1" width="7" height="7" fill="#f4f4f4" stroke="#111" stroke-width="1"/><rect x="7.500" y="1" width="7" height="2" fill="#111"/><rect x="1.500" y="7.500" width="7.500" height="7" fill="#eef" stroke="#666" stroke-width="1"/><path d="M4 12l5-5M5.500 6.500h4v4" stroke="#111" stroke-width="2" fill="none"/></svg><svg class="a" style="left:622px;top:70px;overflow:visible" width="16" height="16" viewBox="0 0 16 16"><rect x="2.500" y="2" width="11" height="12" fill="#f0f2fa" stroke="#000" stroke-width="1.400"/><rect x="2.500" y="2" width="11" height="3" fill="#000"/></svg><div class="sep" style="left:97px;top:70px;height:17px"></div><div class="sep" style="left:128px;top:70px;height:17px"></div><div class="sep" style="left:366px;top:70px;height:17px"></div><div class="sep" style="left:398px;top:70px;height:17px"></div><div class="sep" style="left:451px;top:70px;height:17px"></div><div class="sep" style="left:529px;top:70px;height:17px"></div><div class="sep" style="left:559px;top:70px;height:17px"></div><div class="sep" style="left:590px;top:70px;height:17px"></div>
<div class="a vtb" style="left:1094px;top:67px;width:586px"></div><svg class="a" style="left:1096px;top:70px;overflow:visible" width="16" height="16" viewBox="0 0 16 16"><path d="M3.500 6h9L8 11z" fill="#000"/></svg><svg class="a" style="left:1127px;top:70px;overflow:visible" width="16" height="16" viewBox="0 0 16 16"><circle cx="8" cy="3.400" r="2.200" fill="#5a5a5a"/><circle cx="7.400" cy="2.800" r=".8" fill="#b0b0b0"/><path d="M7.200 5h1.600v6H7.200z" fill="#555"/><path d="M1.500 10.500h13v4.500h-3v-1h-7v1h-3z" fill="#4c4c4c"/><path d="M2 10.500h12v1.200H2z" fill="#7c7c7c"/><rect x="3.500" y="9.500" width="2" height="1" fill="#666"/></svg><div class="pr" style="left:1154px;top:69px"></div><svg class="a" style="left:1157px;top:70px;overflow:visible" width="16" height="16" viewBox="0 0 16 16"><g transform="translate(-1.2 -.7) scale(1.15)"><path d="M2.500 4.500L9 2l5 2.500-.5 7L7.500 15 2.500 11.500z" fill="#f4f5fb" fill-opacity=".6" stroke="#333" stroke-width="1.100" stroke-linejoin="round"/><path d="M2.500 4.500L8 7.500 14 4.500M8 7.500L7.500 15" stroke="#333" stroke-width="1" fill="none"/></g></svg><svg class="a" style="left:1180px;top:70px;overflow:visible" width="16" height="16" viewBox="0 0 16 16"><g transform="translate(-1.2 -.7) scale(1.15)"><path d="M2.500 4.500L9 2l5 2.500-.5 7L7.500 15 2.500 11.500z" fill="#f4f5fb" fill-opacity=".6" stroke="#3a3a3a" stroke-width="1.100" stroke-linejoin="round"/><path d="M2.500 4.500L8 7.500 14 4.500M8 7.500L7.500 15M9 2L8.500 9.500 2.500 11.500M8.500 9.500L13.500 11.500" stroke="#555" stroke-width=".8" fill="none"/></g></svg><svg class="a" style="left:1203px;top:70px;overflow:visible" width="16" height="16" viewBox="0 0 16 16"><g transform="translate(-.3 -.2) scale(1.03)"><path d="M2.500 5L8.500 2 14 4.500 13.500 11 8 15 3 11.500z" fill="#a4ece4" stroke="#2c5e5a" stroke-width="2.200" stroke-linejoin="round"/><path d="M2.500 5L8.500 2 14 4.500 13.500 11 8 15 3 11.500z" fill="#a4ece4" stroke="#a4ece4" stroke-width=".6" stroke-linejoin="round"/><path d="M2.800 5L8.500 2.400 13.600 4.600 8 7.300z" fill="#effffd"/><path d="M8 7.500L13.700 4.800 13.300 10.800 8 14.600z" fill="#74ccc4"/></g></svg><svg class="a" style="left:1226px;top:70px;overflow:visible" width="16" height="16" viewBox="0 0 16 16"><g transform="translate(-1.2 -.7) scale(1.15)"><path d="M1.500 12.500h6V15h-6z" fill="#444" opacity=".7"/><path d="M2.500 4.500L9 2l5 2.500-.5 7L7.500 15 2.500 11.500z" fill="url(#c3)" stroke="#143c38" stroke-width="1.100" stroke-linejoin="round"/><path d="M2.500 4.500L8 7.500 14 4.500M8 7.500L7.500 15" stroke="#143c38" stroke-width="1" fill="none"/><path d="M3 5l5.500-2.200L13 4.800 8 7z" fill="#b8f4ec"/></g></svg><svg class="a" style="left:1249px;top:70px;overflow:visible" width="16" height="16" viewBox="0 0 16 16"><g transform="translate(-1.2 -.7) scale(1.15)"><path d="M1.500 12.500h6V15h-6z" fill="#444" opacity=".7"/><path d="M2.500 4.500L9 2l5 2.500-.5 7L7.500 15 2.500 11.500z" fill="url(#c3)" stroke="#1c4c46" stroke-width="1" stroke-linejoin="round"/><path d="M3 5l5.500-2.200L13 4.800 8 7z" fill="#a0e8dc"/><path d="M8 7.500L7.500 14.500l-4.500-3V5z" fill="#3a9a8e"/></g></svg><svg class="a" style="left:1272px;top:70px;overflow:visible" width="16" height="16" viewBox="0 0 16 16"><g transform="translate(-1.2 -.7) scale(1.15)"><path d="M7 2l7 3v9l-7-3z" fill="#2a8078" stroke="#143c38" stroke-width=".8"/><path d="M4.500 2.500l7 3v9l-7-3z" fill="#58b8ac" stroke="#143c38" stroke-width=".8"/><path d="M2 3l7 3v9l-7-3z" fill="url(#c2)" stroke="#1c5a54" stroke-width=".9"/></g></svg><svg class="a" style="left:1295px;top:70px;overflow:visible" width="16" height="16" viewBox="0 0 16 16"><g transform="translate(-.3 -.2) scale(1.03)"><path d="M.5 12h7.500v3.500H.5z" fill="#4a4a4a" opacity=".6"/><path d="M2.500 5L8.500 2 14 4.500 13.500 11 8 15 3 11.500z" fill="#b8948c" stroke="#3e2c28" stroke-width="2.200" stroke-linejoin="round"/><path d="M2.500 5L8.500 2 14 4.500 13.500 11 8 15 3 11.500z" fill="#b8948c" stroke="#b8948c" stroke-width=".6" stroke-linejoin="round"/><path d="M2.800 5L8.500 2.400 13.600 4.600 8 7.300z" fill="#f4e2dc"/><path d="M8 7.500L13.700 4.800 13.300 10.800 8 14.600z" fill="#70504a"/></g></svg><svg class="a" style="left:1318px;top:70px;overflow:visible" width="16" height="16" viewBox="0 0 16 16"><path d="M5 2h8v3h2v7h-2v2H5v-2H3V5h2z" fill="#8a8a8a" stroke="#555" stroke-width=".8"/><path d="M1 5h5v7H1z" fill="#6e6e6e"/><circle cx="6.500" cy="9" r="3.600" fill="#999" stroke="#444" stroke-width=".6"/><text x="4.300" y="11.700" font-family="Liberation Sans,sans-serif" font-weight="bold" font-size="7.500" fill="#111">S</text></svg><svg class="a" style="left:1341px;top:70px;overflow:visible" width="16" height="16" viewBox="0 0 16 16"><rect x="0" y="0" width="16" height="16" fill="#c4c4c8"/><g transform="translate(-.3 -.2) scale(1.03)"><path d="M2.500 5L8.500 2 14 4.500 13.500 11 8 15 3 11.500z" fill="#c094dc" stroke="#4c3468" stroke-width="2.200" stroke-linejoin="round"/><path d="M2.500 5L8.500 2 14 4.500 13.500 11 8 15 3 11.500z" fill="#c094dc" stroke="#c094dc" stroke-width=".6" stroke-linejoin="round"/><path d="M2.800 5L8.500 2.400 13.600 4.600 8 7.300z" fill="#f4e0fc"/><path d="M8 7.500L13.700 4.800 13.300 10.800 8 14.600z" fill="#8058a8"/></g></svg><svg class="a" style="left:1364px;top:70px;overflow:visible" width="16" height="16" viewBox="0 0 16 16"><g transform="translate(-1.2 -.7) scale(1.15)"><path d="M1.500 12.500h6V15h-6z" fill="#555" opacity=".6"/><path d="M2.500 4.500L9 2l5 2.500-.5 7L7.500 15 2.500 11.500z" fill="url(#c3)" stroke="#143c38" stroke-width="1" stroke-linejoin="round"/><path d="M2.500 4.500L8 7.500 14 4.500M8 7.500L7.500 15M5.700 3.300l5.500 2.700-.3 7.300M11.500 3.200L5.200 6l-.2 7.300M2.500 8l5.300 3.200 6-3.200" stroke="#0e2e2a" stroke-width=".8" fill="none"/></g></svg><svg class="a" style="left:1396px;top:70px;overflow:visible" width="16" height="16" viewBox="0 0 16 16"><rect x="0" y="0" width="16" height="16" fill="#c6c6c6"/><text x="3.200" y="14.300" font-family="Liberation Sans,sans-serif" font-weight="bold" font-size="17" fill="#000" stroke="#000" stroke-width=".5" textLength="9.500" lengthAdjust="spacingAndGlyphs">G</text></svg><svg class="a" style="left:1427px;top:70px;overflow:visible" width="16" height="16" viewBox="0 0 16 16"><path d="M4.500 7V4.500a3.500 3.500 0 0 1 7 0V7" fill="none" stroke="#48a0d8" stroke-width="1.800"/><rect x="2.500" y="7" width="11" height="8.500" rx="1" fill="url(#lk)" stroke="#b86c10" stroke-width=".8"/><rect x="7" y="9.500" width="2" height="3.500" fill="#fff4d8"/></svg><svg class="a" style="left:1450px;top:70px;overflow:visible" width="16" height="16" viewBox="0 0 16 16"><path d="M.5 8.500C4 4 12 4 15.500 8.500 12 12 4 12 .5 8.500z" fill="#ddd" stroke="#111" stroke-width="1"/><path d="M.5 7.500C4 3 12 3 15.500 7.500" stroke="#111" stroke-width="2" fill="none"/><circle cx="8" cy="8.300" r="2.800" fill="#111"/></svg><svg class="a" style="left:1482px;top:70px;overflow:visible" width="16" height="16" viewBox="0 0 16 16"><g fill="#111"><circle cx="9" cy="2.600" r="2.100"/><path d="M7.600 4h2.800l1.200 4.200 3.400 1.600.5 2.200v3H1v-3l.5-2 4.500-1.500z"/></g><rect x="3" y="12" width="2" height="1.300" fill="#eee"/></svg><svg class="a" style="left:1505px;top:70px;overflow:visible" width="16" height="16" viewBox="0 0 16 16"><circle cx="8" cy="8" r="8" fill="#f09090" opacity=".75"/><g fill="#b01010"><circle cx="9" cy="2.600" r="2.100"/><path d="M7.600 4h2.800l1.200 4.200 3.400 1.600.5 2.200v3H1v-3l.5-2 4.500-1.500z"/></g><rect x="3" y="12" width="2" height="1.300" fill="#fff"/></svg><svg class="a" style="left:1527px;top:70px;overflow:visible" width="16" height="16" viewBox="0 0 16 16"><path d="M1.200 10.500v4.500" stroke="#d02020" stroke-width="1.600"/><text x="4" y="15" font-family="Liberation Sans,sans-serif" font-size="15.500" fill="#000" stroke="#000" stroke-width=".35">S</text></svg><svg class="a" style="left:1558px;top:70px;overflow:visible" width="16" height="16" viewBox="0 0 16 16"><rect x="1" y="1.500" width="14" height="13" fill="#f2f4fc" stroke="#111" stroke-width="1.100"/><rect x="1.600" y="11.500" width="12.800" height="2.400" fill="#3c6cd0"/></svg><svg class="a" style="left:1590px;top:70px;overflow:visible" width="16" height="16" viewBox="0 0 16 16"><rect x="5.500" y="1" width="5" height="3" fill="#333"/><rect x="4" y="4" width="8" height="8" fill="url(#st)" stroke="#111" stroke-width=".6"/><path d="M1.500 11h3v1.500h9V15h-12z" fill="#888"/><path d="M1.500 13.500h12V15h-12z" fill="#333"/></svg><svg class="a" style="left:1620px;top:70px;overflow:visible" width="16" height="16" viewBox="0 0 16 16"><rect x="7.500" y="1" width="7" height="7" fill="#f4f4f4" stroke="#111" stroke-width="1"/><rect x="7.500" y="1" width="7" height="2" fill="#111"/><rect x="1.500" y="7.500" width="7.500" height="7" fill="#eef" stroke="#666" stroke-width="1"/><path d="M4 12l5-5M5.500 6.500h4v4" stroke="#111" stroke-width="2" fill="none"/></svg><svg class="a" style="left:1643px;top:70px;overflow:visible" width="16" height="16" viewBox="0 0 16 16"><rect x="2.500" y="2" width="11" height="12" fill="#f0f2fa" stroke="#000" stroke-width="1.400"/><rect x="2.500" y="2" width="11" height="3" fill="#000"/></svg><div class="sep" style="left:1118px;top:70px;height:17px"></div><div class="sep" style="left:1149px;top:70px;height:17px"></div><div class="sep" style="left:1386px;top:70px;height:17px"></div><div class="sep" style="left:1419px;top:70px;height:17px"></div><div class="sep" style="left:1472px;top:70px;height:17px"></div><div class="sep" style="left:1550px;top:70px;height:17px"></div><div class="sep" style="left:1580px;top:70px;height:17px"></div><div class="sep" style="left:1612px;top:70px;height:17px"></div>
<div class="a" style="left:73px;top:348px;width:1607px;height:6px;background:#f0f0f0"></div><div class="a" style="left:73px;top:353px;width:1607px;height:1px;background:#a2a4ae"></div>
<div class="a vtb" style="left:73px;top:354px;width:1015px"></div><svg class="a" style="left:74px;top:357px;overflow:visible" width="16" height="16" viewBox="0 0 16 16"><path d="M3.500 6h9L8 11z" fill="#000"/></svg><svg class="a" style="left:106px;top:357px;overflow:visible" width="16" height="16" viewBox="0 0 16 16"><circle cx="8" cy="3.400" r="2.200" fill="#5a5a5a"/><circle cx="7.400" cy="2.800" r=".8" fill="#b0b0b0"/><path d="M7.200 5h1.600v6H7.200z" fill="#555"/><path d="M1.500 10.500h13v4.500h-3v-1h-7v1h-3z" fill="#4c4c4c"/><path d="M2 10.500h12v1.200H2z" fill="#7c7c7c"/><rect x="3.500" y="9.500" width="2" height="1" fill="#666"/></svg><svg class="a" style="left:136px;top:357px;overflow:visible" width="16" height="16" viewBox="0 0 16 16"><g transform="translate(-1.2 -.7) scale(1.15)"><path d="M2.500 4.500L9 2l5 2.500-.5 7L7.500 15 2.500 11.500z" fill="#f4f5fb" fill-opacity=".6" stroke="#333" stroke-width="1.100" stroke-linejoin="round"/><path d="M2.500 4.500L8 7.500 14 4.500M8 7.500L7.500 15" stroke="#333" stroke-width="1" fill="none"/></g></svg><svg class="a" style="left:159px;top:357px;overflow:visible" width="16" height="16" viewBox="0 0 16 16"><g transform="translate(-1.2 -.7) scale(1.15)"><path d="M2.500 4.500L9 2l5 2.500-.5 7L7.500 15 2.500 11.500z" fill="#f4f5fb" fill-opacity=".6" stroke="#3a3a3a" stroke-width="1.100" stroke-linejoin="round"/><path d="M2.500 4.500L8 7.500 14 4.500M8 7.500L7.500 15M9 2L8.500 9.500 2.500 11.500M8.500 9.500L13.500 11.500" stroke="#555" stroke-width=".8" fill="none"/></g></svg><svg class="a" style="left:182px;top:357px;overflow:visible" width="16" height="16" viewBox="0 0 16 16"><g transform="translate(-.3 -.2) scale(1.03)"><path d="M2.500 5L8.500 2 14 4.500 13.500 11 8 15 3 11.500z" fill="#a4ece4" stroke="#2c5e5a" stroke-width="2.200" stroke-linejoin="round"/><path d="M2.500 5L8.500 2 14 4.500 13.500 11 8 15 3 11.500z" fill="#a4ece4" stroke="#a4ece4" stroke-width=".6" stroke-linejoin="round"/><path d="M2.800 5L8.500 2.400 13.600 4.600 8 7.300z" fill="#effffd"/><path d="M8 7.500L13.700 4.800 13.300 10.800 8 14.600z" fill="#74ccc4"/></g></svg><div class="pr" style="left:203px;top:356px"></div><svg class="a" style="left:205px;top:357px;overflow:visible" width="16" height="16" viewBox="0 0 16 16"><g transform="translate(-1.2 -.7) scale(1.15)"><path d="M1.500 12.500h6V15h-6z" fill="#444" opacity=".7"/><path d="M2.500 4.500L9 2l5 2.500-.5 7L7.500 15 2.500 11.500z" fill="url(#c3)" stroke="#143c38" stroke-width="1.100" stroke-linejoin="round"/><path d="M2.500 4.500L8 7.500 14 4.500M8 7.500L7.500 15" stroke="#143c38" stroke-width="1" fill="none"/><path d="M3 5l5.500-2.200L13 4.800 8 7z" fill="#b8f4ec"/></g></svg><svg class="a" style="left:228px;top:357px;overflow:visible" width="16" height="16" viewBox="0 0 16 16"><g transform="translate(-1.2 -.7) scale(1.15)"><path d="M1.500 12.500h6V15h-6z" fill="#444" opacity=".7"/><path d="M2.500 4.500L9 2l5 2.500-.5 7L7.500 15 2.500 11.500z" fill="url(#c3)" stroke="#1c4c46" stroke-width="1" stroke-linejoin="round"/><path d="M3 5l5.500-2.200L13 4.800 8 7z" fill="#a0e8dc"/><path d="M8 7.500L7.500 14.500l-4.500-3V5z" fill="#3a9a8e"/></g></svg><svg class="a" style="left:251px;top:357px;overflow:visible" width="16" height="16" viewBox="0 0 16 16"><g transform="translate(-1.2 -.7) scale(1.15)"><path d="M7 2l7 3v9l-7-3z" fill="#2a8078" stroke="#143c38" stroke-width=".8"/><path d="M4.500 2.500l7 3v9l-7-3z" fill="#58b8ac" stroke="#143c38" stroke-width=".8"/><path d="M2 3l7 3v9l-7-3z" fill="url(#c2)" stroke="#1c5a54" stroke-width=".9"/></g></svg><svg class="a" style="left:274px;top:357px;overflow:visible" width="16" height="16" viewBox="0 0 16 16"><g transform="translate(-.3 -.2) scale(1.03)"><path d="M.5 12h7.500v3.500H.5z" fill="#4a4a4a" opacity=".6"/><path d="M2.500 5L8.500 2 14 4.500 13.500 11 8 15 3 11.500z" fill="#b8948c" stroke="#3e2c28" stroke-width="2.200" stroke-linejoin="round"/><path d="M2.500 5L8.500 2 14 4.500 13.500 11 8 15 3 11.500z" fill="#b8948c" stroke="#b8948c" stroke-width=".6" stroke-linejoin="round"/><path d="M2.800 5L8.500 2.400 13.600 4.600 8 7.300z" fill="#f4e2dc"/><path d="M8 7.500L13.700 4.800 13.300 10.800 8 14.600z" fill="#70504a"/></g></svg><svg class="a" style="left:297px;top:357px;overflow:visible" width="16" height="16" viewBox="0 0 16 16"><path d="M5 2h8v3h2v7h-2v2H5v-2H3V5h2z" fill="#8a8a8a" stroke="#555" stroke-width=".8"/><path d="M1 5h5v7H1z" fill="#6e6e6e"/><circle cx="6.500" cy="9" r="3.600" fill="#999" stroke="#444" stroke-width=".6"/><text x="4.300" y="11.700" font-family="Liberation Sans,sans-serif" font-weight="bold" font-size="7.500" fill="#111">S</text></svg><svg class="a" style="left:320px;top:357px;overflow:visible" width="16" height="16" viewBox="0 0 16 16"><rect x="0" y="0" width="16" height="16" fill="#c4c4c8"/><g transform="translate(-.3 -.2) scale(1.03)"><path d="M2.500 5L8.500 2 14 4.500 13.500 11 8 15 3 11.500z" fill="#c094dc" stroke="#4c3468" stroke-width="2.200" stroke-linejoin="round"/><path d="M2.500 5L8.500 2 14 4.500 13.500 11 8 15 3 11.500z" fill="#c094dc" stroke="#c094dc" stroke-width=".6" stroke-linejoin="round"/><path d="M2.800 5L8.500 2.400 13.600 4.600 8 7.300z" fill="#f4e0fc"/><path d="M8 7.500L13.700 4.800 13.300 10.800 8 14.600z" fill="#8058a8"/></g></svg><svg class="a" style="left:343px;top:357px;overflow:visible" width="16" height="16" viewBox="0 0 16 16"><g transform="translate(-1.2 -.7) scale(1.15)"><path d="M1.500 12.500h6V15h-6z" fill="#555" opacity=".6"/><path d="M2.500 4.500L9 2l5 2.500-.5 7L7.500 15 2.500 11.500z" fill="url(#c3)" stroke="#143c38" stroke-width="1" stroke-linejoin="round"/><path d="M2.500 4.500L8 7.500 14 4.500M8 7.500L7.500 15M5.700 3.300l5.500 2.700-.3 7.300M11.500 3.200L5.200 6l-.2 7.300M2.500 8l5.300 3.200 6-3.200" stroke="#0e2e2a" stroke-width=".8" fill="none"/></g></svg><svg class="a" style="left:375px;top:357px;overflow:visible" width="16" height="16" viewBox="0 0 16 16"><rect x="0" y="0" width="16" height="16" fill="#c6c6c6"/><text x="3.200" y="14.300" font-family="Liberation Sans,sans-serif" font-weight="bold" font-size="17" fill="#000" stroke="#000" stroke-width=".5" textLength="9.500" lengthAdjust="spacingAndGlyphs">G</text></svg><svg class="a" style="left:406px;top:357px;overflow:visible" width="16" height="16" viewBox="0 0 16 16"><path d="M4.500 7V4.500a3.500 3.500 0 0 1 7 0V7" fill="none" stroke="#48a0d8" stroke-width="1.800"/><rect x="2.500" y="7" width="11" height="8.500" rx="1" fill="url(#lk)" stroke="#b86c10" stroke-width=".8"/><rect x="7" y="9.500" width="2" height="3.500" fill="#fff4d8"/></svg><svg class="a" style="left:428px;top:357px;overflow:visible" width="16" height="16" viewBox="0 0 16 16"><path d="M.5 8.500C4 4 12 4 15.500 8.500 12 12 4 12 .5 8.500z" fill="#ddd" stroke="#111" stroke-width="1"/><path d="M.5 7.500C4 3 12 3 15.500 7.500" stroke="#111" stroke-width="2" fill="none"/><circle cx="8" cy="8.300" r="2.800" fill="#111"/></svg><svg class="a" style="left:461px;top:357px;overflow:visible" width="16" height="16" viewBox="0 0 16 16"><g fill="#111"><circle cx="9" cy="2.600" r="2.100"/><path d="M7.600 4h2.800l1.200 4.200 3.400 1.600.5 2.200v3H1v-3l.5-2 4.500-1.500z"/></g><rect x="3" y="12" width="2" height="1.300" fill="#eee"/></svg><div class="pr" style="left:482px;top:356px"></div><svg class="a" style="left:484px;top:357px;overflow:visible" width="16" height="16" viewBox="0 0 16 16"><circle cx="8" cy="8" r="8" fill="#f09090" opacity=".75"/><g fill="#b01010"><circle cx="9" cy="2.600" r="2.100"/><path d="M7.600 4h2.800l1.200 4.200 3.400 1.600.5 2.200v3H1v-3l.5-2 4.500-1.500z"/></g><rect x="3" y="12" width="2" height="1.300" fill="#fff"/></svg><svg class="a" style="left:506px;top:357px;overflow:visible" width="16" height="16" viewBox="0 0 16 16"><path d="M1.200 10.500v4.500" stroke="#d02020" stroke-width="1.600"/><text x="4" y="15" font-family="Liberation Sans,sans-serif" font-size="15.500" fill="#000" stroke="#000" stroke-width=".35">S</text></svg><svg class="a" style="left:538px;top:357px;overflow:visible" width="16" height="16" viewBox="0 0 16 16"><rect x="1" y="1.500" width="14" height="13" fill="#f2f4fc" stroke="#111" stroke-width="1.100"/><rect x="1.600" y="11.500" width="12.800" height="2.400" fill="#3c6cd0"/></svg><svg class="a" style="left:568px;top:357px;overflow:visible" width="16" height="16" viewBox="0 0 16 16"><rect x="5.500" y="1" width="5" height="3" fill="#333"/><rect x="4" y="4" width="8" height="8" fill="url(#st)" stroke="#111" stroke-width=".6"/><path d="M1.500 11h3v1.500h9V15h-12z" fill="#888"/><path d="M1.500 13.500h12V15h-12z" fill="#333"/></svg><svg class="a" style="left:599px;top:357px;overflow:visible" width="16" height="16" viewBox="0 0 16 16"><rect x="7.500" y="1" width="7" height="7" fill="#f4f4f4" stroke="#111" stroke-width="1"/><rect x="7.500" y="1" width="7" height="2" fill="#111"/><rect x="1.500" y="7.500" width="7.500" height="7" fill="#eef" stroke="#666" stroke-width="1"/><path d="M4 12l5-5M5.500 6.500h4v4" stroke="#111" stroke-width="2" fill="none"/></svg><svg class="a" style="left:622px;top:357px;overflow:visible" width="16" height="16" viewBox="0 0 16 16"><rect x="2.500" y="2" width="11" height="12" fill="#f0f2fa" stroke="#000" stroke-width="1.400"/><rect x="2.500" y="2" width="11" height="3" fill="#000"/></svg><div class="sep" style="left:97px;top:357px;height:17px"></div><div class="sep" style="left:128px;top:357px;height:17px"></div><div class="sep" style="left:366px;top:357px;height:17px"></div><div class="sep" style="left:398px;top:357px;height:17px"></div><div class="sep" style="left:451px;top:357px;height:17px"></div><div class="sep" style="left:529px;top:357px;height:17px"></div><div class="sep" style="left:559px;top:357px;height:17px"></div><div class="sep" style="left:590px;top:357px;height:17px"></div>
<div class="a vtb" style="left:1094px;top:354px;width:586px"></div><svg class="a" style="left:1096px;top:357px;overflow:visible" width="16" height="16" viewBox="0 0 16 16"><path d="M3.500 6h9L8 11z" fill="#000"/></svg><svg class="a" style="left:1127px;top:357px;overflow:visible" width="16" height="16" viewBox="0 0 16 16"><circle cx="8" cy="3.400" r="2.200" fill="#5a5a5a"/><circle cx="7.400" cy="2.800" r=".8" fill="#b0b0b0"/><path d="M7.200 5h1.600v6H7.200z" fill="#555"/><path d="M1.500 10.500h13v4.500h-3v-1h-7v1h-3z" fill="#4c4c4c"/><path d="M2 10.500h12v1.200H2z" fill="#7c7c7c"/><rect x="3.500" y="9.500" width="2" height="1" fill="#666"/></svg><div class="pr" style="left:1154px;top:356px"></div><svg class="a" style="left:1157px;top:357px;overflow:visible" width="16" height="16" viewBox="0 0 16 16"><g transform="translate(-1.2 -.7) scale(1.15)"><path d="M2.500 4.500L9 2l5 2.500-.5 7L7.500 15 2.500 11.500z" fill="#f4f5fb" fill-opacity=".6" stroke="#333" stroke-width="1.100" stroke-linejoin="round"/><path d="M2.500 4.500L8 7.500 14 4.500M8 7.500L7.500 15" stroke="#333" stroke-width="1" fill="none"/></g></svg><svg class="a" style="left:1180px;top:357px;overflow:visible" width="16" height="16" viewBox="0 0 16 16"><g transform="translate(-1.2 -.7) scale(1.15)"><path d="M2.500 4.500L9 2l5 2.500-.5 7L7.500 15 2.500 11.500z" fill="#f4f5fb" fill-opacity=".6" stroke="#3a3a3a" stroke-width="1.100" stroke-linejoin="round"/><path d="M2.500 4.500L8 7.500 14 4.500M8 7.500L7.500 15M9 2L8.500 9.500 2.500 11.500M8.500 9.500L13.500 11.500" stroke="#555" stroke-width=".8" fill="none"/></g></svg><svg class="a" style="left:1203px;top:357px;overflow:visible" width="16" height="16" viewBox="0 0 16 16"><g transform="translate(-.3 -.2) scale(1.03)"><path d="M2.500 5L8.500 2 14 4.500 13.500 11 8 15 3 11.500z" fill="#a4ece4" stroke="#2c5e5a" stroke-width="2.200" stroke-linejoin="round"/><path d="M2.500 5L8.500 2 14 4.500 13.500 11 8 15 3 11.500z" fill="#a4ece4" stroke="#a4ece4" stroke-width=".6" stroke-linejoin="round"/><path d="M2.800 5L8.500 2.400 13.600 4.600 8 7.300z" fill="#effffd"/><path d="M8 7.500L13.700 4.800 13.300 10.800 8 14.600z" fill="#74ccc4"/></g></svg><svg class="a" style="left:1226px;top:357px;overflow:visible" width="16" height="16" viewBox="0 0 16 16"><g transform="translate(-1.2 -.7) scale(1.15)"><path d="M1.500 12.500h6V15h-6z" fill="#444" opacity=".7"/><path d="M2.500 4.500L9 2l5 2.500-.5 7L7.500 15 2.500 11.500z" fill="url(#c3)" stroke="#143c38" stroke-width="1.100" stroke-linejoin="round"/><path d="M2.500 4.500L8 7.500 14 4.500M8 7.500L7.500 15" stroke="#143c38" stroke-width="1" fill="none"/><path d="M3 5l5.500-2.200L13 4.800 8 7z" fill="#b8f4ec"/></g></svg><svg class="a" style="left:1249px;top:357px;overflow:visible" width="16" height="16" viewBox="0 0 16 16"><g transform="translate(-1.2 -.7) scale(1.15)"><path d="M1.500 12.500h6V15h-6z" fill="#444" opacity=".7"/><path d="M2.500 4.500L9 2l5 2.500-.5 7L7.500 15 2.500 11.500z" fill="url(#c3)" stroke="#1c4c46" stroke-width="1" stroke-linejoin="round"/><path d="M3 5l5.500-2.200L13 4.800 8 7z" fill="#a0e8dc"/><path d="M8 7.500L7.500 14.500l-4.500-3V5z" fill="#3a9a8e"/></g></svg><svg class="a" style="left:1272px;top:357px;overflow:visible" width="16" height="16" viewBox="0 0 16 16"><g transform="translate(-1.2 -.7) scale(1.15)"><path d="M7 2l7 3v9l-7-3z" fill="#2a8078" stroke="#143c38" stroke-width=".8"/><path d="M4.500 2.500l7 3v9l-7-3z" fill="#58b8ac" stroke="#143c38" stroke-width=".8"/><path d="M2 3l7 3v9l-7-3z" fill="url(#c2)" stroke="#1c5a54" stroke-width=".9"/></g></svg><svg class="a" style="left:1295px;top:357px;overflow:visible" width="16" height="16" viewBox="0 0 16 16"><g transform="translate(-.3 -.2) scale(1.03)"><path d="M.5 12h7.500v3.500H.5z" fill="#4a4a4a" opacity=".6"/><path d="M2.500 5L8.500 2 14 4.500 13.500 11 8 15 3 11.500z" fill="#b8948c" stroke="#3e2c28" stroke-width="2.200" stroke-linejoin="round"/><path d="M2.500 5L8.500 2 14 4.500 13.500 11 8 15 3 11.500z" fill="#b8948c" stroke="#b8948c" stroke-width=".6" stroke-linejoin="round"/><path d="M2.800 5L8.500 2.400 13.600 4.600 8 7.300z" fill="#f4e2dc"/><path d="M8 7.500L13.700 4.800 13.300 10.800 8 14.600z" fill="#70504a"/></g></svg><svg class="a" style="left:1318px;top:357px;overflow:visible" width="16" height="16" viewBox="0 0 16 16"><path d="M5 2h8v3h2v7h-2v2H5v-2H3V5h2z" fill="#8a8a8a" stroke="#555" stroke-width=".8"/><path d="M1 5h5v7H1z" fill="#6e6e6e"/><circle cx="6.500" cy="9" r="3.600" fill="#999" stroke="#444" stroke-width=".6"/><text x="4.300" y="11.700" font-family="Liberation Sans,sans-serif" font-weight="bold" font-size="7.500" fill="#111">S</text></svg><svg class="a" style="left:1341px;top:357px;overflow:visible" width="16" height="16" viewBox="0 0 16 16"><rect x="0" y="0" width="16" height="16" fill="#c4c4c8"/><g transform="translate(-.3 -.2) scale(1.03)"><path d="M2.500 5L8.500 2 14 4.500 13.500 11 8 15 3 11.500z" fill="#c094dc" stroke="#4c3468" stroke-width="2.200" stroke-linejoin="round"/><path d="M2.500 5L8.500 2 14 4.500 13.500 11 8 15 3 11.500z" fill="#c094dc" stroke="#c094dc" stroke-width=".6" stroke-linejoin="round"/><path d="M2.800 5L8.500 2.400 13.600 4.600 8 7.300z" fill="#f4e0fc"/><path d="M8 7.500L13.700 4.800 13.300 10.800 8 14.600z" fill="#8058a8"/></g></svg><svg class="a" style="left:1364px;top:357px;overflow:visible" width="16" height="16" viewBox="0 0 16 16"><g transform="translate(-1.2 -.7) scale(1.15)"><path d="M1.500 12.500h6V15h-6z" fill="#555" opacity=".6"/><path d="M2.500 4.500L9 2l5 2.500-.5 7L7.500 15 2.500 11.500z" fill="url(#c3)" stroke="#143c38" stroke-width="1" stroke-linejoin="round"/><path d="M2.500 4.500L8 7.500 14 4.500M8 7.500L7.500 15M5.700 3.300l5.500 2.700-.3 7.300M11.500 3.200L5.200 6l-.2 7.300M2.500 8l5.300 3.200 6-3.200" stroke="#0e2e2a" stroke-width=".8" fill="none"/></g></svg><svg class="a" style="left:1396px;top:357px;overflow:visible" width="16" height="16" viewBox="0 0 16 16"><rect x="0" y="0" width="16" height="16" fill="#c6c6c6"/><text x="3.200" y="14.300" font-family="Liberation Sans,sans-serif" font-weight="bold" font-size="17" fill="#000" stroke="#000" stroke-width=".5" textLength="9.500" lengthAdjust="spacingAndGlyphs">G</text></svg><svg class="a" style="left:1427px;top:357px;overflow:visible" width="16" height="16" viewBox="0 0 16 16"><path d="M4.500 7V4.500a3.500 3.500 0 0 1 7 0V7" fill="none" stroke="#48a0d8" stroke-width="1.800"/><rect x="2.500" y="7" width="11" height="8.500" rx="1" fill="url(#lk)" stroke="#b86c10" stroke-width=".8"/><rect x="7" y="9.500" width="2" height="3.500" fill="#fff4d8"/></svg><svg class="a" style="left:1450px;top:357px;overflow:visible" width="16" height="16" viewBox="0 0 16 16"><path d="M.5 8.500C4 4 12 4 15.500 8.500 12 12 4 12 .5 8.500z" fill="#ddd" stroke="#111" stroke-width="1"/><path d="M.5 7.500C4 3 12 3 15.500 7.500" stroke="#111" stroke-width="2" fill="none"/><circle cx="8" cy="8.300" r="2.800" fill="#111"/></svg><svg class="a" style="left:1482px;top:357px;overflow:visible" width="16" height="16" viewBox="0 0 16 16"><g fill="#111"><circle cx="9" cy="2.600" r="2.100"/><path d="M7.600 4h2.800l1.200 4.200 3.400 1.600.5 2.200v3H1v-3l.5-2 4.500-1.500z"/></g><rect x="3" y="12" width="2" height="1.300" fill="#eee"/></svg><svg class="a" style="left:1505px;top:357px;overflow:visible" width="16" height="16" viewBox="0 0 16 16"><circle cx="8" cy="8" r="8" fill="#f09090" opacity=".75"/><g fill="#b01010"><circle cx="9" cy="2.600" r="2.100"/><path d="M7.600 4h2.800l1.200 4.200 3.400 1.600.5 2.200v3H1v-3l.5-2 4.500-1.500z"/></g><rect x="3" y="12" width="2" height="1.300" fill="#fff"/></svg><svg class="a" style="left:1527px;top:357px;overflow:visible" width="16" height="16" viewBox="0 0 16 16"><path d="M1.200 10.500v4.500" stroke="#d02020" stroke-width="1.600"/><text x="4" y="15" font-family="Liberation Sans,sans-serif" font-size="15.500" fill="#000" stroke="#000" stroke-width=".35">S</text></svg><svg class="a" style="left:1558px;top:357px;overflow:visible" width="16" height="16" viewBox="0 0 16 16"><rect x="1" y="1.500" width="14" height="13" fill="#f2f4fc" stroke="#111" stroke-width="1.100"/><rect x="1.600" y="11.500" width="12.800" height="2.400" fill="#3c6cd0"/></svg><svg class="a" style="left:1590px;top:357px;overflow:visible" width="16" height="16" viewBox="0 0 16 16"><rect x="5.500" y="1" width="5" height="3" fill="#333"/><rect x="4" y="4" width="8" height="8" fill="url(#st)" stroke="#111" stroke-width=".6"/><path d="M1.500 11h3v1.500h9V15h-12z" fill="#888"/><path d="M1.500 13.500h12V15h-12z" fill="#333"/></svg><svg class="a" style="left:1620px;top:357px;overflow:visible" width="16" height="16" viewBox="0 0 16 16"><rect x="7.500" y="1" width="7" height="7" fill="#f4f4f4" stroke="#111" stroke-width="1"/><rect x="7.500" y="1" width="7" height="2" fill="#111"/><rect x="1.500" y="7.500" width="7.500" height="7" fill="#eef" stroke="#666" stroke-width="1"/><path d="M4 12l5-5M5.500 6.500h4v4" stroke="#111" stroke-width="2" fill="none"/></svg><svg class="a" style="left:1643px;top:357px;overflow:visible" width="16" height="16" viewBox="0 0 16 16"><rect x="2.500" y="2" width="11" height="12" fill="#f0f2fa" stroke="#000" stroke-width="1.400"/><rect x="2.500" y="2" width="11" height="3" fill="#000"/></svg><div class="sep" style="left:1118px;top:357px;height:17px"></div><div class="sep" style="left:1149px;top:357px;height:17px"></div><div class="sep" style="left:1386px;top:357px;height:17px"></div><div class="sep" style="left:1419px;top:357px;height:17px"></div><div class="sep" style="left:1472px;top:357px;height:17px"></div><div class="sep" style="left:1550px;top:357px;height:17px"></div><div class="sep" style="left:1580px;top:357px;height:17px"></div><div class="sep" style="left:1612px;top:357px;height:17px"></div>
<svg class="a" style="left:2px;top:47px;overflow:visible" width="16" height="16" viewBox="0 0 16 16"><path d="M3 1.500h7l3.500 3.500v9.500H3z" fill="#fff" stroke="#555" stroke-width="1"/><path d="M10 1.500V5h3.500" fill="#ddd" stroke="#555" stroke-width="1"/></svg><svg class="a" style="left:25px;top:47px;overflow:visible" width="16" height="16" viewBox="0 0 16 16"><path d="M1.500 14V5.500h4l1 1.500h5V9" fill="#d8d070" stroke="#6a6420" stroke-width="1"/><path d="M1.500 14l3-5.500h11L12 14z" fill="#c8c058" stroke="#6a6420" stroke-width="1"/><path d="M8.500 4c1.500-2.500 4.500-2.500 5.500 0M14.300 1.500V4.300h-2.800" stroke="#444" stroke-width="1" fill="none"/></svg><svg class="a" style="left:64px;top:47px;overflow:visible" width="16" height="16" viewBox="0 0 16 16"><path d="M1.500 1.500h13v13h-11l-2-2z" fill="#8a8c48" stroke="#54562a" stroke-width="1"/><rect x="4" y="1.500" width="8" height="6" fill="#f4f4f4"/><rect x="4.500" y="10" width="7" height="4.500" fill="#444"/><rect x="9" y="10.800" width="1.800" height="3" fill="#ddd"/></svg><svg class="a" style="left:88px;top:47px;overflow:visible" width="16" height="16" viewBox="0 0 16 16"><path d="M1.500 1.500h9v9h-9z" fill="#8a8c48" stroke="#54562a"/><path d="M3.500 3.500h9v9h-9z" fill="#8a8c48" stroke="#54562a"/><path d="M5.500 5.500h9v9h-9z" fill="#8a8c48" stroke="#54562a"/><rect x="7.500" y="5.500" width="5" height="4" fill="#f0f0f0"/><rect x="7.500" y="11.500" width="5" height="3" fill="#f0f0f0"/></svg><svg class="a" style="left:119px;top:47px;overflow:visible" width="16" height="16" viewBox="0 0 16 16"><path d="M4.500 8C6.500 4.500 12 5 12.800 9c.4 2-1 3.800-3 4.300" stroke="#3848b8" stroke-width="1.400" fill="none"/><path d="M1.500 5.500l1.200 5.500 4.800-2.800z" fill="#3040b0"/></svg><svg class="a" style="left:142px;top:47px;overflow:visible" width="16" height="16" viewBox="0 0 16 16"><path d="M11.500 8C9.500 4.500 4 5 3.200 9c-.4 2 1 3.800 3 4.300" stroke="#b4b8c2" stroke-width="1.400" fill="none"/><path d="M14.500 5.500l-1.200 5.500-4.800-2.800z" fill="#a8acb6"/></svg><svg class="a" style="left:172px;top:47px;overflow:visible" width="16" height="16" viewBox="0 0 16 16"><rect x="-1" y="-1" width="17" height="17" fill="#dedee6" stroke="#c4c4d0" stroke-width=".6"/><path d="M3 .5v13.500l3.200-3 2.300 5 2.200-1-2.300-4.900h4.400z" fill="#fff" stroke="#222" stroke-width="1.100" stroke-linejoin="round"/></svg><svg class="a" style="left:195px;top:47px;overflow:visible" width="16" height="16" viewBox="0 0 16 16"><path d="M8 .8l2.600 3H9v3.200h3.200V5.400l3 2.600-3 2.600V9H9v3.200h1.600L8 15.200l-2.600-3H7V9H3.800v1.600L.8 8l3-2.600V7H7V3.800H5.400z" fill="#d8d8dc" stroke="#3c3c3c" stroke-width="1" stroke-linejoin="round"/></svg><div class="pr" style="left:216px;top:46px"></div><svg class="a" style="left:219px;top:47px;overflow:visible" width="16" height="16" viewBox="0 0 16 16"><path d="M4 3.500C1.500 6 1.500 11 5 13c3.500 2 8 0 8.500-4 .3-2.500-1-4.500-2.500-5.500" stroke="#444" stroke-width="2.200" fill="none"/><path d="M8 1l4.500 1.500L10 6.500z" fill="#444"/></svg><svg class="a" style="left:242px;top:47px;overflow:visible" width="16" height="16" viewBox="0 0 16 16"><rect x="1.500" y="1.500" width="13" height="13" fill="#8a8a8a"/><rect x="2.500" y="6.500" width="7" height="7" fill="#fff" stroke="#e05050" stroke-width="1.400"/></svg><svg class="a" style="left:265px;top:47px;overflow:visible" width="16" height="16" viewBox="0 0 16 16"><rect x="4.500" y="1.500" width="7" height="13" fill="#8a8a8a"/><rect x="5.500" y="4.500" width="3.500" height="9" fill="#fff" stroke="#e05050" stroke-width="1.200"/></svg><svg class="a" style="left:363px;top:47px;overflow:visible" width="16" height="16" viewBox="0 0 16 16"><path d="M2 6l2-4h2.500l.5 4zM14 6l-2-4H9.500L9 6z" fill="#111"/><rect x="1" y="6" width="6" height="8" rx="1.500" fill="#111"/><rect x="9" y="6" width="6" height="8" rx="1.500" fill="#111"/><rect x="6.500" y="5" width="3" height="4" fill="#111"/><path d="M2.500 8v4M10.500 8v4" stroke="#999" stroke-width="1"/></svg><svg class="a" style="left:394px;top:47px;overflow:visible" width="16" height="16" viewBox="0 0 16 16"><rect x="0" y="0" width="16" height="16" fill="#141414"/><circle cx="8" cy="8" r="6" fill="#555"/><path d="M5 5v5c0 2.500 6 2.500 6 0V5H9.500v5c0 1-3 1-3 0V5z" fill="#e8e8e8"/></svg><svg class="a" style="left:425px;top:47px;overflow:visible" width="16" height="16" viewBox="0 0 16 16"><text x="0" y="14" font-family="Liberation Sans,sans-serif" font-weight="bold" font-size="16" fill="#186818">K</text><path d="M9 11l5 3.500M14 11.500v3h-3" stroke="#28a028" stroke-width="1.400" fill="none"/></svg><svg class="a" style="left:449px;top:47px;overflow:visible" width="16" height="16" viewBox="0 0 16 16"><g transform="translate(-3 -1.500) scale(1.380 1.200)"><rect x="1" y="1" width="14" height="14" rx="2" fill="#f4f4f4" stroke="#111" stroke-width="1.200"/><rect x="3" y="7" width="10" height="6" fill="#111"/><path d="M3 6l10-3 .5 1.800-10 3z" fill="#111"/><path d="M5 9.500h6M5 11.500h6" stroke="#fff" stroke-width=".7"/></g></svg><svg class="a" style="left:569px;top:47px;overflow:visible" width="16" height="16" viewBox="0 0 16 16"><path d="M1.500 3.500l9-2 4 1.500v9.500l-9 2.500-4-2z" fill="#8ab8dc" stroke="#5a88b0" stroke-width=".8"/><path d="M1.500 3.500l4 2 9-2.500M5.500 5.500V15" stroke="#c8e0f4" stroke-width="1" fill="none"/></svg><svg class="a" style="left:592px;top:47px;overflow:visible" width="16" height="16" viewBox="0 0 16 16"><rect x="1.500" y="1.500" width="13" height="13" fill="#c03838" stroke="#222" stroke-width="1"/><path d="M1.500 14.500l13-13" stroke="#222" stroke-width="1"/></svg><div class="pr" style="left:612px;top:46px"></div><svg class="a" style="left:615px;top:47px;overflow:visible" width="16" height="16" viewBox="0 0 16 16"><text x="2" y="15" font-family="Liberation Sans,sans-serif" font-weight="bold" font-size="17" fill="#0e3c34">P</text></svg><svg class="a" style="left:638px;top:47px;overflow:visible" width="16" height="16" viewBox="0 0 16 16"><path d="M8 0v6M5.500 4L8 7l2.500-3z" stroke="#111" stroke-width="1.200" fill="#111"/><path d="M3 9h10c0 2-2 4.500-5 4.500S3 11 3 9z" fill="#e01818"/></svg><svg class="a" style="left:661px;top:47px;overflow:visible" width="16" height="16" viewBox="0 0 16 16"><rect x="0" y="0" width="16" height="16" fill="#0a0a0a"/><circle cx="4" cy="4" r="1.800" fill="#e04040"/><circle cx="11" cy="3.500" r="1.800" fill="#40c0e0"/><circle cx="8" cy="8" r="2" fill="#e0e040"/><circle cx="3.500" cy="11.500" r="1.800" fill="#50d050"/><circle cx="12" cy="11" r="2" fill="#d050d0"/><circle cx="7.500" cy="13.500" r="1.200" fill="#e08030"/></svg><svg class="a" style="left:692px;top:47px;overflow:visible" width="16" height="16" viewBox="0 0 16 16"><path d="M2.500 4.500Q8 .8 13.500 3.800L13.200 11.200Q10.500 14.500 7 15Q3.500 13.500 2.800 11z" fill="#4aa89c" stroke="#1c4c46" stroke-width="1.300" stroke-linejoin="round"/><path d="M4 5.500Q8 3 12 5L11.800 10.500Q10 12.500 7.500 13Q5 12 4.300 10.500z" fill="#b4f0e6"/><path d="M7.500 7.500L12 5.200 11.800 10.500Q10 12.500 7.500 13z" fill="#5cb8ac"/></svg><svg class="a" style="left:714px;top:47px;overflow:visible" width="16" height="16" viewBox="0 0 16 16"><path d="M8 1.500c-3 0-4.200 2.500-3.500 4.500.5 1.500 1.500 2 1.500 4h4c0-2 1-2.500 1.500-4C12.200 4 11 1.500 8 1.500z" fill="#f0fff8" stroke="#8ab8a8" stroke-width=".9"/><rect x="6.500" y="10.500" width="3" height="3.500" fill="#3a6a5c"/></svg><svg class="a" style="left:737px;top:47px;overflow:visible" width="16" height="16" viewBox="0 0 16 16"><path d="M3.500 4.500L7 8.500 12.500 3.500M7 8.500L11.500 13.500M3.500 4.500L4.200 11.500" stroke="#0e3c34" stroke-width="1.500" fill="none"/><circle cx="3.5" cy="4.5" r="1.800" fill="#5a6a68"/><circle cx="7" cy="8.5" r="1.800" fill="#0e3c34"/><circle cx="4.2" cy="11.5" r="1.800" fill="#5a6a68"/><circle cx="12.5" cy="3.5" r="1.800" fill="#5a6a68"/><circle cx="11.5" cy="13.5" r="1.800" fill="#5a6a68"/></svg><svg class="a" style="left:760px;top:47px;overflow:visible" width="16" height="16" viewBox="0 0 16 16"><path d="M3.500 4.500L7 8.500 12.500 3.500M7 8.500L11.500 13.500M3.500 4.500L4.200 11.500" stroke="#0e3c34" stroke-width="1.500" fill="none"/><circle cx="3.5" cy="4.5" r="1.800" fill="#5a6a68"/><circle cx="7" cy="8.5" r="1.800" fill="#0e3c34"/><circle cx="4.2" cy="11.5" r="1.800" fill="#5a6a68"/><circle cx="12.5" cy="3.5" r="1.800" fill="#d02020"/><circle cx="11.5" cy="13.5" r="1.800" fill="#d02020"/></svg><svg class="a" style="left:783px;top:47px;overflow:visible" width="16" height="16" viewBox="0 0 16 16"><g transform="translate(-1.500 0) scale(.95)"><path d="M2.500 4.500Q8 .8 13.500 3.800L13.200 11.200Q10.500 14.500 7 15Q3.500 13.500 2.800 11z" fill="#4aa89c" stroke="#1c4c46" stroke-width="1.300" stroke-linejoin="round"/><path d="M4 5.500Q8 3 12 5L11.800 10.500Q10 12.500 7.500 13Q5 12 4.300 10.500z" fill="#b4f0e6"/><path d="M7.500 7.500L12 5.200 11.800 10.500Q10 12.500 7.500 13z" fill="#5cb8ac"/></g><path d="M12.500 6c-1.800 0-2.500 1.500-2 2.800.3.800.8 1.200.8 2.400h2.400c0-1.200.5-1.600.8-2.400.5-1.300-.2-2.800-2-2.800z" fill="#e8fff8" stroke="#4a8a7c" stroke-width=".7"/><rect x="11.600" y="11.500" width="1.800" height="2.500" fill="#1c4c46"/></svg><svg class="a" style="left:806px;top:47px;overflow:visible" width="16" height="16" viewBox="0 0 16 16"><path d="M6 1c-3 0-4.200 2.500-3.500 4.500.5 1.500 1.500 2 1.500 4h4c0-2 1-2.500 1.500-4C10.200 3.500 9 1 6 1z" fill="#fff" stroke="#333" stroke-width="1.100"/><rect x="4.500" y="10" width="3" height="4.500" fill="#333"/><path d="M9 12.500c2-2 5-2 6.500 0-1.500 2-4.500 2-6.500 0z" fill="#111"/><circle cx="12.300" cy="12.500" r="1" fill="#fff"/></svg><svg class="a" style="left:838px;top:47px;overflow:visible" width="16" height="16" viewBox="0 0 16 16"><rect x="1" y="2" width="14" height="12" rx="1" fill="#f0f0f0" stroke="#111" stroke-width="1.200"/><rect x="3" y="4.500" width="10" height="7" fill="#a8e0d8" stroke="#1c4c46" stroke-width=".8"/><path d="M3 7h10M3 9.500h10M6.500 4.500v7M10 4.500v7" stroke="#1c4c46" stroke-width=".6"/></svg><svg class="a" style="left:869px;top:47px;overflow:visible" width="16" height="16" viewBox="0 0 16 16"><rect x="5.500" y="1" width="5" height="3" fill="#333"/><rect x="4" y="4" width="8" height="7" fill="url(#st)" stroke="#111" stroke-width=".6"/><path d="M4 8l7-1.500 1 3-7 2z" fill="#2838d8"/><path d="M1.500 11h3v1.500h9V15h-12z" fill="#888"/><path d="M1.500 13.500h12V15h-12z" fill="#333"/></svg><svg class="a" style="left:892px;top:47px;overflow:visible" width="16" height="16" viewBox="0 0 16 16"><circle cx="8" cy="2.800" r="2" fill="#222"/><path d="M7 4.500h2l1 6H6z" fill="#333"/><path d="M2 10.500h12V15H2z" fill="#222"/><path d="M2 10.500h12v1.300H2z" fill="#777"/></svg><div class="sep" style="left:110px;top:46px;height:18px"></div><div class="sep" style="left:164px;top:46px;height:18px"></div><div class="sep" style="left:287px;top:46px;height:18px"></div><div class="sep" style="left:356px;top:46px;height:18px"></div><div class="sep" style="left:386px;top:46px;height:18px"></div><div class="sep" style="left:418px;top:46px;height:18px"></div><div class="sep" style="left:470px;top:46px;height:18px"></div><div class="sep" style="left:561px;top:46px;height:18px"></div><div class="sep" style="left:684px;top:46px;height:18px"></div><div class="sep" style="left:829px;top:46px;height:18px"></div><div class="sep" style="left:861px;top:46px;height:18px"></div><div class="a" style="left:47px;top:45px;width:13px;height:21px;border:1px solid #707070;border-radius:3px;background:linear-gradient(#f4f4f4 0,#ebebeb 48%,#dddddd 52%,#cfcfcf 100%)"><svg class="a" style="left:3px;top:8px" width="5" height="3"><path d="M0 0h5L2.500 3z" fill="#000"/></svg></div><div class="a" style="left:293px;top:46px;width:60px;height:22px;border:1px solid #707070;border-radius:3px;background:linear-gradient(#f4f4f4 0,#ebebeb 48%,#dddddd 52%,#cfcfcf 100%);box-shadow:inset 0 0 0 1px #fcfcfc"><div class="a" style="left:3px;top:3px;font-size:11.500px;line-height:16px;letter-spacing:-2.300px;white-space:nowrap">ローカル</div><svg class="a" style="left:47px;top:9px" width="7" height="4"><path d="M0 0h7L3.500 4z" fill="#000"/></svg></div><div class="a" style="left:478px;top:45px;width:80px;height:21px;background:rgba(250,250,253,.72)"></div><div class="a" style="left:485px;top:53px;width:62px;height:3px;border:1px solid #b0b0b8;border-radius:1px;background:#e8e8ee"></div><div class="a" style="left:542px;top:48px;width:8px;height:14px;border:1px solid #888;border-radius:2px 2px 4px 4px;background:linear-gradient(90deg,#fafafa,#d0d0d4)"></div>
<svg class="a" style="left:76px;top:379px" width="1009" height="643" viewBox="0 0 1009 643"><rect width="1009" height="643" fill="#050505"/><defs><linearGradient id="hz" x1="0" y1="0" x2="0" y2="1"><stop offset="0" stop-color="#0a0a48"/><stop offset=".38" stop-color="#0a0a46"/><stop offset=".5" stop-color="#08082e"/><stop offset=".75" stop-color="#06061a"/><stop offset="1" stop-color="#050505"/></linearGradient></defs><rect x="0" y="189" width="1009" height="26" fill="url(#hz)"/><path d="M0 204.5H1009M0 209.5H1009M0 215.5H1009M0 222.5H1009M0 237.5H1009M0 271.5H1009M0.0 313.0L444.0 203.0M1012.0 310.0L574.0 203.0M1012.0 249.0L604.0 204.0M4.0 237.0L64.0 643.0M1012.0 261.0L974.0 643.0" stroke="#0a0a2c" stroke-width="1" fill="none"/><path d="M0 425.8L1009 429.6M509.5 191V643" stroke="#0c0c58" stroke-width="1.2" fill="none"/><polygon points="87.2,607.4 935.0,613.9 671.6,349.3 347.0,348.2" fill="#797779"/><path d="M87.2,607.4L139.5,607.8L173.2,569.4L125.6,569.1ZM191.9,608.2L244.4,608.6L268.5,570.1L220.8,569.8ZM297.0,609.0L349.6,609.4L364.2,570.8L316.3,570.4ZM402.4,609.8L455.2,610.2L460.2,571.5L412.1,571.1ZM508.2,610.6L561.2,611.0L556.4,572.1L508.3,571.8ZM614.3,611.4L667.5,611.8L653.0,572.8L604.7,572.5ZM720.8,612.3L774.2,612.7L749.9,573.5L701.4,573.2ZM827.7,613.1L881.3,613.5L847.1,574.2L798.5,573.8ZM173.2,569.4L220.8,569.8L244.9,537.8L201.2,537.5ZM268.5,570.1L316.3,570.4L332.5,538.3L288.6,538.0ZM364.2,570.8L412.1,571.1L420.3,538.9L376.3,538.6ZM460.2,571.5L508.3,571.8L508.4,539.5L464.3,539.2ZM556.4,572.1L604.7,572.5L596.7,540.0L552.5,539.8ZM653.0,572.8L701.4,573.2L685.3,540.6L640.9,540.3ZM749.9,573.5L798.5,573.8L774.1,541.2L729.7,540.9ZM847.1,574.2L895.8,574.5L863.2,541.8L818.6,541.5ZM157.6,537.2L201.2,537.5L224.9,510.4L184.6,510.2ZM244.9,537.8L288.6,538.0L305.7,510.9L265.3,510.7ZM332.5,538.3L376.3,538.6L386.6,511.4L346.1,511.2ZM420.3,538.9L464.3,539.2L467.8,511.9L427.2,511.7ZM508.4,539.5L552.5,539.8L549.1,512.4L508.4,512.1ZM596.7,540.0L640.9,540.3L630.7,512.9L589.9,512.6ZM685.3,540.6L729.7,540.9L712.6,513.4L671.6,513.1ZM774.1,541.2L818.6,541.5L794.6,513.9L753.5,513.6ZM224.9,510.4L265.3,510.7L282.7,487.5L245.3,487.3ZM305.7,510.9L346.1,511.2L357.8,487.9L320.2,487.7ZM386.6,511.4L427.2,511.7L433.1,488.3L395.4,488.1ZM467.8,511.9L508.4,512.1L508.5,488.7L470.7,488.5ZM549.1,512.4L589.9,512.6L584.1,489.2L546.3,489.0ZM630.7,512.9L671.6,513.1L659.9,489.6L622.0,489.4ZM712.6,513.4L753.5,513.6L735.9,490.0L697.9,489.8ZM794.6,513.9L835.7,514.1L812.1,490.5L774.0,490.3ZM207.8,487.0L245.3,487.3L262.9,467.2L227.9,467.0ZM282.7,487.5L320.2,487.7L332.9,467.5L297.9,467.4ZM357.8,487.9L395.4,488.1L403.0,467.9L367.9,467.7ZM433.1,488.3L470.7,488.5L473.3,468.3L438.2,468.1ZM508.5,488.7L546.3,489.0L543.8,468.7L508.5,468.5ZM584.1,489.2L622.0,489.4L614.4,469.0L579.1,468.9ZM659.9,489.6L697.9,489.8L685.2,469.4L649.8,469.2ZM735.9,490.0L774.0,490.3L756.2,469.8L720.7,469.6ZM262.9,467.2L297.9,467.4L311.1,449.8L278.3,449.6ZM332.9,467.5L367.9,467.7L376.8,450.1L343.9,449.9ZM403.0,467.9L438.2,468.1L442.6,450.4L409.7,450.3ZM473.3,468.3L508.5,468.5L508.6,450.8L475.6,450.6ZM543.8,468.7L579.1,468.9L574.7,451.1L541.6,450.9ZM614.4,469.0L649.8,469.2L641.0,451.4L607.8,451.3ZM685.2,469.4L720.7,469.6L707.4,451.8L674.2,451.6ZM756.2,469.8L791.7,470.0L773.9,452.1L740.6,451.9ZM245.5,449.4L278.3,449.6L291.9,434.1L261.1,433.9ZM311.1,449.8L343.9,449.9L353.7,434.4L322.8,434.2ZM376.8,450.1L409.7,450.3L415.6,434.7L384.6,434.5ZM442.6,450.4L475.6,450.6L477.6,435.0L446.6,434.8ZM508.6,450.8L541.6,450.9L539.7,435.3L508.6,435.1ZM574.7,451.1L607.8,451.3L602.0,435.6L570.8,435.4ZM641.0,451.4L674.2,451.6L664.4,435.9L633.2,435.7ZM707.4,451.8L740.6,451.9L726.9,436.2L695.6,436.0ZM291.9,434.1L322.8,434.2L333.1,420.5L304.0,420.3ZM353.7,434.4L384.6,434.5L391.5,420.7L362.3,420.6ZM415.6,434.7L446.6,434.8L450.0,421.0L420.8,420.9ZM477.6,435.0L508.6,435.1L508.7,421.3L479.3,421.1ZM539.7,435.3L570.8,435.4L567.4,421.5L538.0,421.4ZM602.0,435.6L633.2,435.7L626.3,421.8L596.8,421.7ZM664.4,435.9L695.6,436.0L685.2,422.1L655.7,421.9ZM726.9,436.2L758.2,436.3L744.3,422.3L714.7,422.2ZM274.8,420.2L304.0,420.3L314.8,408.0L287.2,407.9ZM333.1,420.5L362.3,420.6L370.1,408.2L342.4,408.1ZM391.5,420.7L420.8,420.9L425.5,408.5L397.7,408.4ZM450.0,421.0L479.3,421.1L480.9,408.7L453.2,408.6ZM508.7,421.3L538.0,421.4L536.5,409.0L508.7,408.8ZM567.4,421.5L596.8,421.7L592.2,409.2L564.3,409.1ZM626.3,421.8L655.7,421.9L648.0,409.4L620.1,409.3ZM685.2,422.1L714.7,422.2L703.9,409.7L675.9,409.6ZM314.8,408.0L342.4,408.1L350.8,397.0L324.5,396.9ZM370.1,408.2L397.7,408.4L403.3,397.2L377.0,397.1ZM425.5,408.5L453.2,408.6L456.0,397.5L429.7,397.3ZM480.9,408.7L508.7,408.8L508.7,397.7L482.4,397.6ZM536.5,409.0L564.3,409.1L561.6,397.9L535.1,397.8ZM592.2,409.2L620.1,409.3L614.5,398.1L588.0,398.0ZM648.0,409.4L675.9,409.6L667.5,398.3L641.0,398.2ZM703.9,409.7L731.8,409.8L720.6,398.6L694.1,398.4ZM298.3,396.8L324.5,396.9L333.3,386.9L308.3,386.8ZM350.8,397.0L377.0,397.1L383.4,387.1L358.3,387.0ZM403.3,397.2L429.7,397.3L433.5,387.3L408.4,387.2ZM456.0,397.5L482.4,397.6L483.6,387.5L458.5,387.4ZM508.7,397.7L535.1,397.8L533.9,387.7L508.8,387.6ZM561.6,397.9L588.0,398.0L584.3,387.9L559.1,387.8ZM614.5,398.1L641.0,398.2L634.7,388.1L609.5,388.0ZM667.5,398.3L694.1,398.4L685.2,388.3L659.9,388.2ZM333.3,386.9L358.3,387.0L365.2,377.8L341.3,377.7ZM383.4,387.1L408.4,387.2L413.0,378.0L389.1,377.9ZM433.5,387.3L458.5,387.4L460.9,378.2L436.9,378.1ZM483.6,387.5L508.8,387.6L508.8,378.4L484.8,378.3ZM533.9,387.7L559.1,387.8L556.8,378.6L532.8,378.5ZM584.3,387.9L609.5,388.0L604.9,378.8L580.8,378.7ZM634.7,388.1L659.9,388.2L653.1,378.9L629.0,378.9ZM685.2,388.3L710.5,388.4L701.3,379.1L677.2,379.0ZM317.5,377.6L341.3,377.7L348.6,369.4L325.8,369.3ZM365.2,377.8L389.1,377.9L394.3,369.6L371.5,369.5ZM413.0,378.0L436.9,378.1L440.1,369.8L417.2,369.7ZM460.9,378.2L484.8,378.3L485.9,369.9L463.0,369.8ZM508.8,378.4L532.8,378.5L531.8,370.1L508.8,370.0ZM556.8,378.6L580.8,378.7L577.7,370.3L554.7,370.2ZM604.9,378.8L629.0,378.9L623.7,370.4L600.7,370.4ZM653.1,378.9L677.2,379.0L669.8,370.6L646.8,370.5ZM348.6,369.4L371.5,369.5L377.2,361.9L355.3,361.8ZM394.3,369.6L417.2,369.7L421.0,362.0L399.1,361.9ZM440.1,369.8L463.0,369.8L464.9,362.2L443.0,362.1ZM485.9,369.9L508.8,370.0L508.8,362.3L486.9,362.3ZM531.8,370.1L554.7,370.2L552.8,362.5L530.8,362.4ZM577.7,370.3L600.7,370.4L596.9,362.6L574.9,362.6ZM623.7,370.4L646.8,370.5L641.0,362.8L618.9,362.7ZM669.8,370.6L692.9,370.7L685.2,363.0L663.1,362.9ZM333.5,361.7L355.3,361.8L361.5,354.8L340.5,354.7ZM377.2,361.9L399.1,361.9L403.5,354.9L382.5,354.8ZM421.0,362.0L443.0,362.1L445.6,355.0L424.6,355.0ZM464.9,362.2L486.9,362.3L487.8,355.2L466.7,355.1ZM508.8,362.3L530.8,362.4L530.0,355.3L508.9,355.3ZM552.8,362.5L574.9,362.6L572.2,355.5L551.1,355.4ZM596.9,362.6L618.9,362.7L614.5,355.6L593.4,355.6ZM641.0,362.8L663.1,362.9L656.9,355.8L635.7,355.7ZM361.5,354.8L382.5,354.8L387.4,348.3L367.2,348.3ZM403.5,354.9L424.6,355.0L427.8,348.5L407.6,348.4ZM445.6,355.0L466.7,355.1L468.3,348.6L448.1,348.5ZM487.8,355.2L508.9,355.3L508.9,348.7L488.6,348.7ZM530.0,355.3L551.1,355.4L549.5,348.9L529.2,348.8ZM572.2,355.5L593.4,355.6L590.1,349.0L569.8,349.0ZM614.5,355.6L635.7,355.7L630.8,349.2L610.5,349.1ZM656.9,355.8L678.1,355.9L671.6,349.3L651.2,349.2Z" fill="#48468f"/><path d="M139.5,607.8L367.2,348.3M125.6,569.1L895.8,574.5M191.9,608.2L387.4,348.3M157.6,537.2L863.2,541.8M244.4,608.6L407.6,348.4M184.6,510.2L835.7,514.1M297.0,609.0L427.8,348.5M207.8,487.0L812.1,490.5M349.6,609.4L448.1,348.5M227.9,467.0L791.7,470.0M402.4,609.8L468.3,348.6M245.5,449.4L773.9,452.1M455.2,610.2L488.6,348.7M261.1,433.9L758.2,436.3M508.2,610.6L508.9,348.7M274.8,420.2L744.3,422.3M561.2,611.0L529.2,348.8M287.2,407.9L731.8,409.8M614.3,611.4L549.5,348.9M298.3,396.8L720.6,398.6M667.5,611.8L569.8,349.0M308.3,386.8L710.5,388.4M720.8,612.3L590.1,349.0M317.5,377.6L701.3,379.1M774.2,612.7L610.5,349.1M325.8,369.3L692.9,370.7M827.7,613.1L630.8,349.2M333.5,361.7L685.2,363.0M881.3,613.5L651.2,349.2M340.5,354.7L678.1,355.9" stroke="#23264a" stroke-opacity=".75" stroke-width="1.1" fill="none"/><polygon points="87.2,607.4 935.0,613.9 929.7,635.3 93.5,628.6" fill="#6e6e6e"/><path d="M140.2,607.8L193.2,608.2L198.0,629.4L145.8,629.0ZM246.2,608.6L299.1,609.0L302.6,630.3L250.3,629.9ZM352.1,609.4L405.1,609.8L407.1,631.1L354.8,630.7ZM458.1,610.2L511.1,610.6L511.6,632.0L459.3,631.5ZM564.1,611.1L617.1,611.5L616.1,632.8L563.9,632.4ZM670.1,611.9L723.0,612.3L720.7,633.6L668.4,633.2ZM776.0,612.7L829.0,613.1L825.2,634.5L772.9,634.0ZM882.0,613.5L935.0,613.9L929.7,635.3L877.4,634.9Z" fill="#434188"/><path d="M140.2,607.8L145.8,629.0M193.2,608.2L198.0,629.4M246.2,608.6L250.3,629.9M299.1,609.0L302.6,630.3M352.1,609.4L354.8,630.7M405.1,609.8L407.1,631.1M458.1,610.2L459.3,631.5M511.1,610.6L511.6,632.0M564.1,611.1L563.9,632.4M617.1,611.5L616.1,632.8M670.1,611.9L668.4,633.2M723.0,612.3L720.7,633.6M776.0,612.7L772.9,634.0M829.0,613.1L825.2,634.5M882.0,613.5L877.4,634.9" stroke="#2c2c44" stroke-opacity=".6" fill="none"/><path d="M87.2,607.4L935.0,613.9L671.6,349.3L347.0,348.2ZM93.5,628.6L929.7,635.3L671.4,358.1L348.5,357.0ZM87.2,607.4L93.5,628.6M935.0,613.9L929.7,635.3M671.6,349.3L671.4,358.1M347.0,348.2L348.5,357.0" stroke="#6e0c12" stroke-width="1" fill="none"/><path d="M27.0 592.0V615.5" stroke="#2222b8" stroke-width="1.6" fill="none"/><path d="M27.0 615.5H51.0" stroke="#58c858" stroke-width="1.2" fill="none"/><text x="29" y="596" font-family="Liberation Sans,sans-serif" font-size="12" fill="#2626c8">Z</text><text x="29" y="614" font-family="Liberation Sans,sans-serif" font-size="12" fill="#b83434">X</text><text x="53" y="620" font-family="Liberation Sans,sans-serif" font-size="12" fill="#58c858">Y</text></svg>
<svg class="a" style="left:1321px;top:194px;overflow:visible" width="40" height="40" viewBox="0 0 40 40"><defs><radialGradient id="lg1" cx=".5" cy=".5" r=".5"><stop offset="0" stop-color="#ffffff"/><stop offset=".55" stop-color="#f4f4f4"/><stop offset="1" stop-color="#f0f0f0" stop-opacity="0"/></radialGradient></defs><g transform="translate(14 14) scale(0.850)"><rect x="3" y="-10" width="15" height="19" fill="#e2e2e2"/><path d="M3 -8.500h15M3 -5.500h15M3 -2.500h15M3 .5h15M3 3.500h15M3 6.500h15" stroke="#ffffff" stroke-width="1.300"/><path d="M3 -7h15M3 -4h15M3 -1h15M3 2h15M3 5h15M3 8h15" stroke="#bdbdbd" stroke-width=".7"/><rect x="-3.500" y="8" width="7" height="9" rx="1.500" fill="#6a6a6a"/><rect x="-2" y="9" width="3" height="5" fill="#c4c4c4"/><path d="M-3.500 12.500h7M-3.500 14.500h7" stroke="#2c2c2c" stroke-width=".9"/><circle cx="0" cy="0" r="9.500" fill="#585858"/><circle cx="0" cy="0" r="9" fill="none" stroke="#3c3c3c" stroke-width="1"/><ellipse cx="2.800" cy="-.5" rx="6" ry="8.500" fill="url(#lg1)"/><text x="-8" y="3" font-family="Liberation Sans,sans-serif" font-weight="bold" font-size="8" fill="#1a1a1a">D</text><text x="-1.500" y="3" font-family="Liberation Sans,sans-serif" font-size="7" fill="#1a1a1a">/</text><text x="1" y="3.500" font-family="Liberation Sans,sans-serif" font-weight="bold" font-size="8" fill="#1a1a1a">S</text></g><path d="M1 5L11 19M14.500 7L14 19M4 21.500L12.500 19.500" stroke="#a8ccff" stroke-width="1.100" fill="none" transform="translate(14 14)"/></svg>
<svg class="a" style="left:1162px;top:685px;overflow:visible" width="40" height="40" viewBox="0 0 40 40"><defs><radialGradient id="lg2" cx=".5" cy=".5" r=".5"><stop offset="0" stop-color="#ffffff"/><stop offset=".55" stop-color="#f4f4f4"/><stop offset="1" stop-color="#f0f0f0" stop-opacity="0"/></radialGradient></defs><g transform="translate(14 14) scale(0.850)"><rect x="3" y="-10" width="15" height="19" fill="#e2e2e2"/><path d="M3 -8.500h15M3 -5.500h15M3 -2.500h15M3 .5h15M3 3.500h15M3 6.500h15" stroke="#ffffff" stroke-width="1.300"/><path d="M3 -7h15M3 -4h15M3 -1h15M3 2h15M3 5h15M3 8h15" stroke="#bdbdbd" stroke-width=".7"/><rect x="-3.500" y="8" width="7" height="9" rx="1.500" fill="#6a6a6a"/><rect x="-2" y="9" width="3" height="5" fill="#c4c4c4"/><path d="M-3.500 12.500h7M-3.500 14.500h7" stroke="#2c2c2c" stroke-width=".9"/><circle cx="0" cy="0" r="9.500" fill="#585858"/><circle cx="0" cy="0" r="9" fill="none" stroke="#3c3c3c" stroke-width="1"/><ellipse cx="2.800" cy="-.5" rx="6" ry="8.500" fill="url(#lg2)"/><text x="-8" y="3" font-family="Liberation Sans,sans-serif" font-weight="bold" font-size="8" fill="#1a1a1a">D</text><text x="-1.500" y="3" font-family="Liberation Sans,sans-serif" font-size="7" fill="#1a1a1a">/</text><text x="1" y="3.500" font-family="Liberation Sans,sans-serif" font-weight="bold" font-size="8" fill="#1a1a1a">S</text></g><path d="M3 9L8 20M10 7.500L8.500 19M12.500 14L8 20.500M1.500 21L8 20" stroke="#a8ccff" stroke-width="1.100" fill="none" transform="translate(14 14)"/></svg>
<svg class="a" style="left:318px;top:754px;overflow:visible" width="40" height="40" viewBox="0 0 40 40"><defs><radialGradient id="lg3" cx=".5" cy=".5" r=".5"><stop offset="0" stop-color="#ffffff"/><stop offset=".55" stop-color="#f4f4f4"/><stop offset="1" stop-color="#f0f0f0" stop-opacity="0"/></radialGradient></defs><g transform="translate(14 14) scale(1.000)"><rect x="3" y="-10" width="15" height="19" fill="#e2e2e2"/><path d="M3 -8.500h15M3 -5.500h15M3 -2.500h15M3 .5h15M3 3.500h15M3 6.500h15" stroke="#ffffff" stroke-width="1.300"/><path d="M3 -7h15M3 -4h15M3 -1h15M3 2h15M3 5h15M3 8h15" stroke="#bdbdbd" stroke-width=".7"/><rect x="-3.500" y="8" width="7" height="9" rx="1.500" fill="#6a6a6a"/><rect x="-2" y="9" width="3" height="5" fill="#c4c4c4"/><path d="M-3.500 12.500h7M-3.500 14.500h7" stroke="#2c2c2c" stroke-width=".9"/><circle cx="0" cy="0" r="9.500" fill="#585858"/><circle cx="0" cy="0" r="9" fill="none" stroke="#3c3c3c" stroke-width="1"/><ellipse cx="2.800" cy="-.5" rx="6" ry="8.500" fill="url(#lg3)"/><text x="-8" y="3" font-family="Liberation Sans,sans-serif" font-weight="bold" font-size="8" fill="#1a1a1a">D</text><text x="-1.500" y="3" font-family="Liberation Sans,sans-serif" font-size="7" fill="#1a1a1a">/</text><text x="1" y="3.500" font-family="Liberation Sans,sans-serif" font-weight="bold" font-size="8" fill="#1a1a1a">S</text></g><path d="M7.500 9.500L18.500 17L5 24M20.500 3.500L19.500 17" stroke="#a8ccff" stroke-width="1.100" fill="none" transform="translate(14 14)"/></svg>
<svg class="a" style="left:469px;top:224px" width="9" height="12" viewBox="0 0 9 12"><circle cx="4" cy="4" r="3" fill="#555"/><circle cx="5" cy="3.500" r="1.500" fill="#e8e8e8"/><rect x="5" y="1.500" width="3" height="5" fill="#ddd"/><rect x="3.500" y="7" width="1.800" height="3" fill="#444"/><path d="M5 6l1.500 4" stroke="#a8ccff" stroke-width=".8"/></svg>
<svg class="a" style="left:563px;top:668px" width="14" height="20" viewBox="0 0 14 20"><path d="M2 1.500V16.500L5.600 13.200L8 18.500L10 17.600L7.700 12.500H12.200z" fill="#fff" stroke="#000" stroke-width="1"/></svg>
<div class="a" id="dlg" style="left:736px;top:286px;width:356px;height:335px;border:1px solid #56667a;border-radius:7px;background:linear-gradient(#d9e2ec 0,#d0dae6 28px,#ccd7e4 60px,#cdd8e6 100%);box-shadow:inset 0 0 0 1px #f4f8fc,1px 1px 2px rgba(0,0,0,.35)">
<div class="a" style="left:7px;top:6px;font-size:12.5px;line-height:16px;white-space:nowrap">ブラシ ビルダ - Cube</div>
<div class="a" style="left:302px;top:-1px;width:46px;height:20px;border:1px solid #8794a6;border-top:none;border-radius:0 0 5px 5px;background:linear-gradient(#d6dfea,#d0dae6)"></div>
<svg class="a" style="left:320px;top:4px" width="12" height="11" viewBox="0 0 12 11"><path d="M2 1.500l8 8M10 1.500l-8 8" stroke="#5e6876" stroke-width="4.200" fill="none"/><path d="M2 1.500l8 8M10 1.500l-8 8" stroke="#f6f8fb" stroke-width="2.300" fill="none"/></svg>
<div class="a" style="left:6px;top:28px;width:342px;height:299px;border:1px solid #62738a;background:#f0f0f0"></div>
</div>
<div class="a" style="left:755px;top:333px;width:318px;height:225px;border:1px solid #d5d5d5;border-radius:3px;box-shadow:inset 0 0 0 1px #fff"></div>
<div class="a" style="left:760px;top:326.500px;padding:0 2px;background:#f0f0f0;font-size:12px;line-height:16px;white-space:nowrap;transform:scaleX(.75);transform-origin:0 0;width:62px">プロパティ</div>
<div class="a" style="left:764px;top:350px;width:283px;height:8px;background:#404040;border-radius:7px 7px 0 0"></div>
<div class="a" style="left:764px;top:358px;width:283px;height:19px;border-bottom:1px solid #d8d8d8"><div class="a" style="left:0;top:0;width:173px;height:18px;background:transparent;border-right:1px solid #d8d8d8"></div><div class="a" style="left:20px;top:3px;font-size:12px;line-height:14px;white-space:nowrap;font-weight:bold">X</div><div class="a" style="left:177.500px;top:1px;font-size:12.400px;line-height:14px;white-space:nowrap">1024.000000</div><svg class="a" style="left:272px;top:0" width="11" height="19" viewBox="0 0 11 19"><path d="M.5 6.200L5.500 1L10.500 6.200zM.5 12h10L5.500 17.200z" fill="#000"/><path d="M.5 12.500h10" stroke="#fff" stroke-width=".6" opacity=".5"/></svg></div>
<div class="a" style="left:764px;top:377px;width:283px;height:19px;border-bottom:1px solid #d8d8d8"><div class="a" style="left:0;top:0;width:173px;height:18px;background:transparent;border-right:1px solid #d8d8d8"></div><div class="a" style="left:20px;top:3px;font-size:12px;line-height:14px;white-space:nowrap;font-weight:bold">Y</div><div class="a" style="left:177.500px;top:1px;font-size:12.400px;line-height:14px;white-space:nowrap">1024.000000</div><svg class="a" style="left:272px;top:0" width="11" height="19" viewBox="0 0 11 19"><path d="M.5 6.200L5.500 1L10.500 6.200zM.5 12h10L5.500 17.200z" fill="#000"/><path d="M.5 12.500h10" stroke="#fff" stroke-width=".6" opacity=".5"/></svg></div>
<div class="a" style="left:764px;top:396px;width:283px;height:19px;border-bottom:1px solid #d8d8d8"><div class="a" style="left:0;top:0;width:173px;height:18px;background:#f3fff3;border-right:1px solid #d8d8d8"></div><div class="a" style="left:20px;top:3px;font-size:12px;line-height:14px;white-space:nowrap;font-weight:bold">Z</div><div class="a" style="left:177.500px;top:1px;font-size:12.400px;line-height:14px;white-space:nowrap">32.000000</div><svg class="a" style="left:272px;top:0" width="11" height="19" viewBox="0 0 11 19"><path d="M.5 6.200L5.500 1L10.500 6.200zM.5 12h10L5.500 17.200z" fill="#000"/><path d="M.5 12.500h10" stroke="#fff" stroke-width=".6" opacity=".5"/></svg></div>
<div class="a" style="left:764px;top:415px;width:283px;height:19px;border-bottom:1px solid #d8d8d8"><div class="a" style="left:0;top:0;width:173px;height:18px;background:transparent;border-right:1px solid #d8d8d8"></div><div class="a" style="left:20px;top:3px;font-size:11.7px;line-height:14px;white-space:nowrap;">Wall Thickness</div><div class="a" style="left:177.500px;top:1px;font-size:12.400px;line-height:14px;white-space:nowrap">16.000000</div><svg class="a" style="left:272px;top:0" width="11" height="19" viewBox="0 0 11 19"><path d="M.5 6.200L5.500 1L10.500 6.200zM.5 12h10L5.500 17.200z" fill="#000"/><path d="M.5 12.500h10" stroke="#fff" stroke-width=".6" opacity=".5"/></svg></div>
<div class="a" style="left:764px;top:434px;width:283px;height:19px;border-bottom:1px solid #d8d8d8"><div class="a" style="left:0;top:0;width:173px;height:18px;background:transparent;border-right:1px solid #d8d8d8"></div><div class="a" style="left:20px;top:3px;font-size:11.7px;line-height:14px;white-space:nowrap;">Group Name</div><div class="a" style="left:177.500px;top:1px;font-size:12.400px;line-height:14px;white-space:nowrap">Cube</div></div>
<div class="a" style="left:764px;top:453px;width:283px;height:19px;border-bottom:1px solid #d8d8d8"><div class="a" style="left:0;top:0;width:173px;height:18px;background:transparent;border-right:1px solid #d8d8d8"></div><div class="a" style="left:20px;top:3px;font-size:11.7px;line-height:14px;white-space:nowrap;">Hollow?</div><div class="a" style="left:175px;top:2px;width:13px;height:13px;border:1px solid #3c5a84;background:linear-gradient(135deg,#d8dde4,#fafbfc);box-shadow:inset 0 0 0 1px #f4f4f4"></div></div>
<div class="a" style="left:764px;top:472px;width:283px;height:19px;border-bottom:1px solid #d8d8d8"><div class="a" style="left:0;top:0;width:173px;height:18px;background:transparent;border-right:1px solid #d8d8d8"></div><div class="a" style="left:20px;top:3px;font-size:11.7px;line-height:14px;white-space:nowrap;">Tessellated?</div><div class="a" style="left:175px;top:2px;width:13px;height:13px;border:1px solid #3c5a84;background:linear-gradient(135deg,#d8dde4,#fafbfc);box-shadow:inset 0 0 0 1px #f4f4f4"></div></div>
<div class="a" style="left:764px;top:491px;width:283px;height:7px;background:#404040;border-radius:0 0 7px 7px"></div>
<div class="a" style="left:1048px;top:350px;width:16px;height:198px;background:#f4f4f4">
<div class="a" style="left:1px;top:16px;width:14px;height:164px;border:1px solid #979797;border-radius:2px;background:linear-gradient(90deg,#f6f6f6 0,#ececec 45%,#d6d6d6 55%,#dcdcdc 100%)"></div>
<svg class="a" style="left:4px;top:6px" width="8" height="5"><path d="M0 4.500L4 .5L8 4.500z" fill="#444"/></svg>
<svg class="a" style="left:4px;top:188px" width="8" height="5"><path d="M0 .5L4 4.500L8 .5z" fill="#444"/></svg>
<div class="a" style="left:5px;top:94px;width:6px;height:1px;background:#555;box-shadow:0 2px 0 #555,0 4px 0 #555,0 6px 0 #555"></div>
</div>
<div class="a" style="left:910px;top:575px;width:73px;height:22px;border:1px solid #2c628b;border-radius:3px;background:linear-gradient(#eaf6fd 0,#d9f0fc 48%,#bee6fd 52%,#a7d9f5 100%);box-shadow:inset 0 0 0 1px #48d8fb,inset 0 0 0 2px rgba(255,255,255,.5);text-align:center;font-size:11px;line-height:20px;letter-spacing:-.8px">ビルド</div>
<div class="a" style="left:995px;top:575px;width:73px;height:22px;border:1px solid #707070;border-radius:3px;background:linear-gradient(#f2f2f2 0,#ebebeb 48%,#dddddd 52%,#cfcfcf 100%);box-shadow:inset 0 0 0 1px #fcfcfc;text-align:center;font-size:11px;line-height:20px;letter-spacing:-.8px">閉じる</div>
<div class="a" style="left:0;top:1027px;width:1680px;height:23px;background:#f0f0f0"></div><div class="a" style="left:0;top:1026px;width:1680px;height:1px;background:#b4b4b4"></div>
<div class="a" style="left:352px;top:1029px;width:1328px;height:21px;background:#f0eeee;border-top:1px solid #e2e0e0"></div>
<div class="a" style="left:352px;top:1030px;width:2px;height:20px;border-left:1px solid #d4d2d2;border-right:1px solid #fbfbfb"></div>
<div class="a" style="left:732px;top:1030px;width:2px;height:20px;border-left:1px solid #d4d2d2;border-right:1px solid #fbfbfb"></div>
<div class="a" style="left:924px;top:1030px;width:2px;height:20px;border-left:1px solid #d4d2d2;border-right:1px solid #fbfbfb"></div>
<div class="a" style="left:1101px;top:1030px;width:2px;height:20px;border-left:1px solid #d4d2d2;border-right:1px solid #fbfbfb"></div>
<div class="a" style="left:3px;top:1030px;width:346px;height:22px;border:1px solid #8e8f8f;border-radius:2px;background:#fff"></div>
<svg class="a" style="left:336px;top:1039px" width="8" height="5"><path d="M0 0h8L4 4.500z" fill="#000"/></svg>
<div class="a" style="left:1106px;top:1029px;width:60px;height:19px;background:#fff;border:1px solid #e6e6e6;font-size:11.500px;line-height:18px;padding-left:4px;letter-spacing:-.8px;white-space:nowrap">なし</div>
<div class="a" style="left:1168px;top:1029px;width:60px;height:19px;background:#fff;border:1px solid #e6e6e6;font-size:11.500px;line-height:18px;padding-left:4px;letter-spacing:-.8px;white-space:nowrap">なし</div>
<div class="a" style="left:1231px;top:1029px;width:60px;height:19px;background:#fff;border:1px solid #e6e6e6;font-size:11.500px;line-height:18px;padding-left:4px;letter-spacing:-.8px;white-space:nowrap">なし</div>
<div class="a" style="left:1293px;top:1029px;width:60px;height:19px;background:#fff;border:1px solid #e6e6e6;font-size:11.500px;line-height:18px;padding-left:4px;letter-spacing:-.8px;white-space:nowrap">なし</div>
<svg class="a" style="left:1356px;top:1031px" width="14" height="15" viewBox="0 0 14 15"><path d="M1.500 1v12.500H13M1.500 4.500h3M1.500 7.500h6M1.500 10.500h9M4.500 4.500v9M7.500 7.500v6M10.500 10.500v3" stroke="#222" stroke-width="1" fill="none"/></svg>
<div class="a" style="left:1371px;top:1030px;font-size:12.500px;line-height:16px">16</div>
<div class="a" style="left:1401px;top:1032px;width:13px;height:13px;border:1px solid #8e8f8f;background:linear-gradient(135deg,#dfe3e8,#fdfdfd);box-shadow:inset 0 0 0 1px #f4f4f4"><svg class="a" style="left:1px;top:1px" width="9" height="9" viewBox="0 0 9 9"><path d="M1.500 4.500L3.700 7.200L7.800 1.200" stroke="#3a52a4" stroke-width="1.800" fill="none"/></svg></div>
<div class="a" style="left:1417px;top:1030px;width:11px;height:17px;border:1px solid #707070;border-radius:2px;background:linear-gradient(#f4f4f4 0,#ebebeb 48%,#dddddd 52%,#cfcfcf 100%)"><svg class="a" style="left:2px;top:6px" width="5" height="3"><path d="M0 0h5L2.500 3z" fill="#000"/></svg></div>
<svg class="a" style="left:1437px;top:1031px" width="16" height="15" viewBox="0 0 16 15"><path d="M1.500 13.500L8 2.500L13 13.500z" stroke="#222" stroke-width="1.300" fill="none"/><path d="M5 8.500c2-1 4-1 6 1" stroke="#222" fill="none"/></svg>
<div class="a" style="left:1453px;top:1030px;font-size:12.500px;line-height:16px">~6</div>
<div class="a" style="left:1483px;top:1032px;width:13px;height:13px;border:1px solid #8e8f8f;background:linear-gradient(135deg,#dfe3e8,#fdfdfd);box-shadow:inset 0 0 0 1px #f4f4f4"><svg class="a" style="left:1px;top:1px" width="9" height="9" viewBox="0 0 9 9"><path d="M1.500 4.500L3.700 7.200L7.800 1.200" stroke="#3a52a4" stroke-width="1.800" fill="none"/></svg></div>
<div class="a" style="left:1499px;top:1030px;width:11px;height:17px;border:1px solid #707070;border-radius:2px;background:linear-gradient(#f4f4f4 0,#ebebeb 48%,#dddddd 52%,#cfcfcf 100%)"><svg class="a" style="left:2px;top:6px" width="5" height="3"><path d="M0 0h5L2.500 3z" fill="#000"/></svg></div>
<div class="a" style="left:1522px;top:1030px;font-size:12.500px;line-height:16px">5%</div>
<div class="a" style="left:1559px;top:1032px;width:13px;height:13px;border:1px solid #8e8f8f;background:linear-gradient(135deg,#dfe3e8,#fdfdfd);box-shadow:inset 0 0 0 1px #f4f4f4"><svg class="a" style="left:1px;top:1px" width="9" height="9" viewBox="0 0 9 9"><path d="M1.500 4.500L3.700 7.200L7.800 1.200" stroke="#3a52a4" stroke-width="1.800" fill="none"/></svg></div>
<div class="a" style="left:1576px;top:1030px;width:11px;height:17px;border:1px solid #707070;border-radius:2px;background:linear-gradient(#f4f4f4 0,#ebebeb 48%,#dddddd 52%,#cfcfcf 100%)"><svg class="a" style="left:2px;top:6px" width="5" height="3"><path d="M0 0h5L2.500 3z" fill="#000"/></svg></div>
<svg class="a" style="left:1599px;top:1030px" width="17" height="17" viewBox="0 0 17 17"><rect x="1" y="1" width="13" height="14" fill="#6e7440" stroke="#3a3d20"/><rect x="3.500" y="1.500" width="8" height="5" fill="#e8e8e8"/><rect x="4" y="10" width="7" height="5" fill="#c8c8b0"/><path d="M6 10.500l3.500 4L15.500 6" stroke="#0a300a" stroke-width="4" fill="none"/><path d="M6 10.500l3.500 4L15.500 6" stroke="#22e022" stroke-width="2.400" fill="none"/></svg>
<div class="a" style="left:1626px;top:1032px;width:13px;height:13px;border:1px solid #8e8f8f;background:linear-gradient(135deg,#dfe3e8,#fdfdfd);box-shadow:inset 0 0 0 1px #f4f4f4"><svg class="a" style="left:1px;top:1px" width="9" height="9" viewBox="0 0 9 9"><path d="M1.500 4.500L3.700 7.200L7.800 1.200" stroke="#3a52a4" stroke-width="1.800" fill="none"/></svg></div>
<div class="a" style="left:1643px;top:1030px;width:11px;height:17px;border:1px solid #707070;border-radius:2px;background:linear-gradient(#f4f4f4 0,#ebebeb 48%,#dddddd 52%,#cfcfcf 100%)"><svg class="a" style="left:2px;top:6px" width="5" height="3"><path d="M0 0h5L2.500 3z" fill="#000"/></svg></div>
</body></html>
